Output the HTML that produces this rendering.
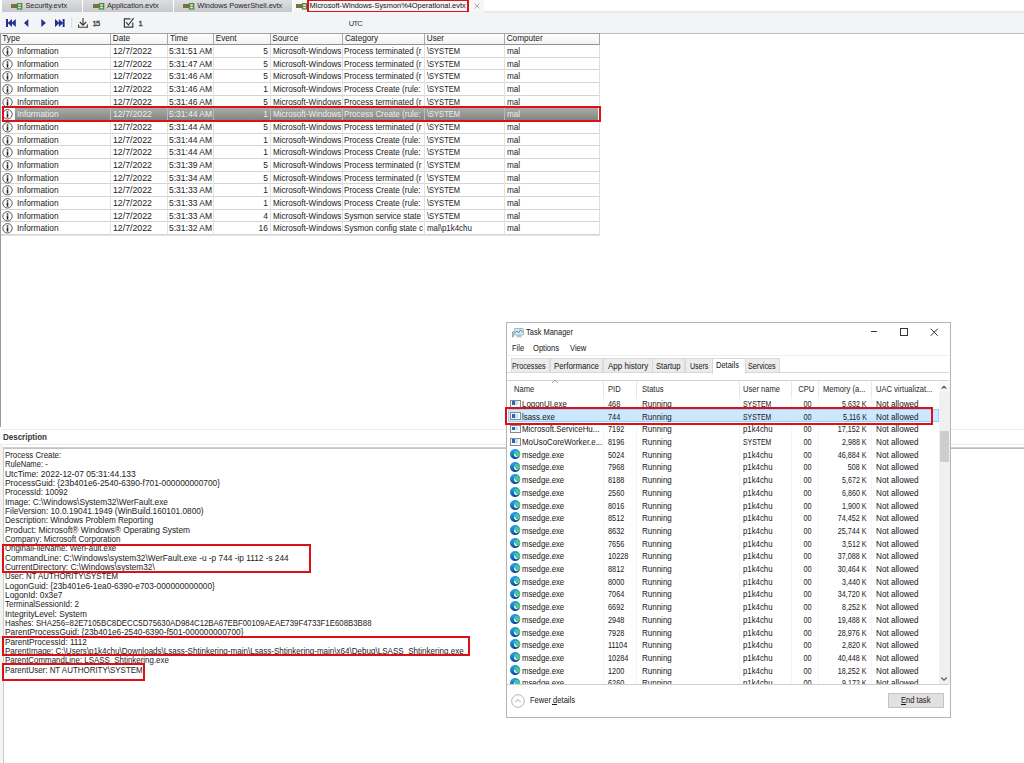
<!DOCTYPE html><html><head><meta charset="utf-8"><style>html,body{margin:0;padding:0;}body{width:1024px;height:763px;position:relative;overflow:hidden;background:#fff;font-family:"Liberation Sans", sans-serif;}div{box-sizing:content-box}</style></head><body>
<div style="position:absolute;left:1.8px;top:0px;width:80.5px;height:11.8px;background:linear-gradient(#dcdee1,#c6c8cb);"></div>
<svg style="position:absolute;left:11.100000000000001px;top:3.1px" width="12" height="8" viewBox="0 0 12 8"><rect x="0" y="1" width="6" height="4" fill="#7d6f3c"/><rect x="5.8" y="0" width="5.5" height="6.6" fill="#4f8a45"/><rect x="7.2" y="1.3" width="2.6" height="1.5" fill="#e8f2e4"/><rect x="7.2" y="3.8" width="2.6" height="1.5" fill="#e8f2e4"/></svg>
<div style="position:absolute;left:25.40px;top:2.34px;font-size:7.4px;line-height:7.4px;color:#2a2a2a;white-space:pre;-webkit-text-stroke:0.03px #2a2a2a;">Security.evtx</div>
<div style="position:absolute;left:83.3px;top:0px;width:89.3px;height:11.8px;background:linear-gradient(#dcdee1,#c6c8cb);"></div>
<svg style="position:absolute;left:92.6px;top:3.1px" width="12" height="8" viewBox="0 0 12 8"><rect x="0" y="1" width="6" height="4" fill="#7d6f3c"/><rect x="5.8" y="0" width="5.5" height="6.6" fill="#4f8a45"/><rect x="7.2" y="1.3" width="2.6" height="1.5" fill="#e8f2e4"/><rect x="7.2" y="3.8" width="2.6" height="1.5" fill="#e8f2e4"/></svg>
<div style="position:absolute;left:106.90px;top:2.34px;font-size:7.4px;line-height:7.4px;color:#2a2a2a;white-space:pre;-webkit-text-stroke:0.03px #2a2a2a;">Application.evtx</div>
<div style="position:absolute;left:173.6px;top:0px;width:118.1px;height:11.8px;background:linear-gradient(#dcdee1,#c6c8cb);"></div>
<svg style="position:absolute;left:182.9px;top:3.1px" width="12" height="8" viewBox="0 0 12 8"><rect x="0" y="1" width="6" height="4" fill="#7d6f3c"/><rect x="5.8" y="0" width="5.5" height="6.6" fill="#4f8a45"/><rect x="7.2" y="1.3" width="2.6" height="1.5" fill="#e8f2e4"/><rect x="7.2" y="3.8" width="2.6" height="1.5" fill="#e8f2e4"/></svg>
<div style="position:absolute;left:197.20px;top:2.34px;font-size:7.4px;line-height:7.4px;color:#2a2a2a;white-space:pre;-webkit-text-stroke:0.03px #2a2a2a;">Windows PowerShell.evtx</div>
<div style="position:absolute;left:292.5px;top:0px;width:191px;height:12.5px;background:#f5f6f7;"></div>
<svg style="position:absolute;left:295.8px;top:3.1px" width="12" height="8" viewBox="0 0 12 8"><rect x="0" y="1" width="6" height="4" fill="#7d6f3c"/><rect x="5.8" y="0" width="5.5" height="6.6" fill="#4f8a45"/><rect x="7.2" y="1.3" width="2.6" height="1.5" fill="#e8f2e4"/><rect x="7.2" y="3.8" width="2.6" height="1.5" fill="#e8f2e4"/></svg>
<div style="position:absolute;left:309.60px;top:2.34px;font-size:7.4px;line-height:7.4px;color:#151515;white-space:pre;-webkit-text-stroke:0.03px #151515;">Microsoft-Windows-Sysmon%4Operational.evtx</div>
<div style="position:absolute;left:307.3px;top:-1.5px;width:157.90px;height:10.00px;border:2.4px solid #dd1016;"></div>
<svg style="position:absolute;left:473.5px;top:2.5px" width="6" height="6" viewBox="0 0 6 6"><path d="M0.6 0.6 L5.4 5.4 M5.4 0.6 L0.6 5.4" stroke="#98a4a8" stroke-width="0.9"/></svg>
<div style="position:absolute;left:484px;top:11.4px;width:540px;height:1.2px;background:#e8e9eb"></div>
<div style="position:absolute;left:0px;top:11.8px;width:1024px;height:21.3px;background:#f3f4f6;"></div>
<div style="position:absolute;left:484px;top:11.4px;width:540px;height:1.2px;background:#e8e9eb"></div>
<div style="position:absolute;left:600px;top:32.7px;width:424px;height:1px;background:#bdbdbd"></div>
<svg style="position:absolute;left:0;top:0" width="160" height="34" viewBox="0 0 160 34"><g fill="#262f8f"><rect x="6" y="19" width="2" height="8"/><path d="M7.6 23 L12 19 V27Z"/><path d="M11.4 23 L15.8 19 V27Z"/><path d="M24 23 L28.3 19 V27Z"/><path d="M45.9 23 L41.3 19 V27Z"/><path d="M55 19 L59.4 23 L55 27Z"/><path d="M58.8 19 L63.2 23 L58.8 27Z"/><rect x="62.6" y="19" width="2" height="8"/></g><rect x="71.2" y="17" width="1" height="11" fill="#d9dbde"/><g stroke="#3a3a3a" stroke-width="1.1" fill="none"><path d="M83 18 V25 M79.8 22 L83 25.2 L86.2 22 M78.6 24.5 V27.3 H87.4 V24.5"/></g><g stroke="#3a3a3a" stroke-width="1.2" fill="none"><path d="M132.8 22.5 V27.2 H124.4 V18.9 H130.5"/><path d="M126.2 22.2 L128.4 25 L133.6 18.2"/></g></svg>
<div style="position:absolute;left:92.40px;top:19.77px;font-size:7.6px;line-height:7.6px;color:#3a3a3a;white-space:pre;letter-spacing:-0.6px;-webkit-text-stroke:0.3px #3a3a3a;">15</div>
<div style="position:absolute;left:138.60px;top:19.77px;font-size:7.6px;line-height:7.6px;color:#3a3a3a;white-space:pre;-webkit-text-stroke:0.3px #3a3a3a;">1</div>
<div style="position:absolute;left:348.70px;top:19.95px;font-size:7.5px;line-height:7.5px;color:#333;white-space:pre;letter-spacing:-0.7px;-webkit-text-stroke:0.03px #333;">UTC</div>
<div style="position:absolute;left:0px;top:32.6px;width:599.6px;height:10.4px;background:linear-gradient(#fefefe,#f2f2f2);border-top:1px solid #a2a2a2;border-bottom:1px solid #8f8f8f;"></div>
<div style="position:absolute;left:2.30px;top:34.56px;font-size:8.2px;line-height:8.2px;color:#262626;white-space:pre;-webkit-text-stroke:0.03px #262626;">Type</div>
<div style="position:absolute;left:110.0px;top:33.5px;width:1px;height:11px;background:#a8a8a8"></div>
<div style="position:absolute;left:112.80px;top:34.56px;font-size:8.2px;line-height:8.2px;color:#262626;white-space:pre;-webkit-text-stroke:0.03px #262626;">Date</div>
<div style="position:absolute;left:167.2px;top:33.5px;width:1px;height:11px;background:#a8a8a8"></div>
<div style="position:absolute;left:170.00px;top:34.56px;font-size:8.2px;line-height:8.2px;color:#262626;white-space:pre;-webkit-text-stroke:0.03px #262626;">Time</div>
<div style="position:absolute;left:212.9px;top:33.5px;width:1px;height:11px;background:#a8a8a8"></div>
<div style="position:absolute;left:215.70px;top:34.56px;font-size:8.2px;line-height:8.2px;color:#262626;white-space:pre;-webkit-text-stroke:0.03px #262626;">Event</div>
<div style="position:absolute;left:269.5px;top:33.5px;width:1px;height:11px;background:#a8a8a8"></div>
<div style="position:absolute;left:272.30px;top:34.56px;font-size:8.2px;line-height:8.2px;color:#262626;white-space:pre;-webkit-text-stroke:0.03px #262626;">Source</div>
<div style="position:absolute;left:342.1px;top:33.5px;width:1px;height:11px;background:#a8a8a8"></div>
<div style="position:absolute;left:344.90px;top:34.56px;font-size:8.2px;line-height:8.2px;color:#262626;white-space:pre;-webkit-text-stroke:0.03px #262626;">Category</div>
<div style="position:absolute;left:424.0px;top:33.5px;width:1px;height:11px;background:#a8a8a8"></div>
<div style="position:absolute;left:426.80px;top:34.56px;font-size:8.2px;line-height:8.2px;color:#262626;white-space:pre;-webkit-text-stroke:0.03px #262626;">User</div>
<div style="position:absolute;left:503.9px;top:33.5px;width:1px;height:11px;background:#a8a8a8"></div>
<div style="position:absolute;left:506.70px;top:34.56px;font-size:8.2px;line-height:8.2px;color:#262626;white-space:pre;-webkit-text-stroke:0.03px #262626;">Computer</div>
<div style="position:absolute;left:599.1px;top:33.5px;width:1px;height:11px;background:#a8a8a8"></div>
<div style="position:absolute;left:0px;top:33px;width:1px;height:394px;background:#9a9a9a"></div>
<div style="position:absolute;left:1px;top:56.769999999999996px;width:598.6px;height:0.8px;background:#d4d4d4"></div>
<div style="position:absolute;left:110.1px;top:44.8px;width:0.8px;height:12.67px;background:#e2e2e2"></div>
<div style="position:absolute;left:167.29999999999998px;top:44.8px;width:0.8px;height:12.67px;background:#e2e2e2"></div>
<div style="position:absolute;left:213.0px;top:44.8px;width:0.8px;height:12.67px;background:#e2e2e2"></div>
<div style="position:absolute;left:269.6px;top:44.8px;width:0.8px;height:12.67px;background:#e2e2e2"></div>
<div style="position:absolute;left:342.20000000000005px;top:44.8px;width:0.8px;height:12.67px;background:#e2e2e2"></div>
<div style="position:absolute;left:424.1px;top:44.8px;width:0.8px;height:12.67px;background:#e2e2e2"></div>
<div style="position:absolute;left:504.0px;top:44.8px;width:0.8px;height:12.67px;background:#e2e2e2"></div>
<div style="position:absolute;left:599.2px;top:44.8px;width:0.8px;height:12.67px;background:#dedede"></div>
<svg style="position:absolute;left:1.6px;top:46.00px" width="11" height="11" viewBox="0 0 11 11"><circle cx="5.5" cy="5.3" r="4.7" fill="#fff" stroke="#555" stroke-width="1"/><rect x="4.7" y="2.3" width="1.6" height="1.4" fill="#1e2030"/><rect x="4.7" y="4.4" width="1.6" height="4.2" fill="#1e2030"/></svg>
<div style="position:absolute;left:17.30px;top:46.95px;font-size:8.8px;line-height:8.8px;color:#242424;white-space:pre;font-weight:normal;-webkit-text-stroke:0.03px #242424;transform:scaleX(0.9428);transform-origin:left center">Information</div>
<div style="position:absolute;left:112.90px;top:46.95px;font-size:8.8px;line-height:8.8px;color:#242424;white-space:pre;font-weight:normal;-webkit-text-stroke:0.03px #242424;transform:scaleX(0.9964);transform-origin:left center">12/7/2022</div>
<div style="position:absolute;left:169.30px;top:46.95px;font-size:8.8px;line-height:8.8px;color:#242424;white-space:pre;font-weight:normal;-webkit-text-stroke:0.03px #242424;transform:scaleX(0.9660);transform-origin:left center">5:31:51 AM</div>
<div style="position:absolute;right:756.20px;top:46.95px;font-size:8.8px;line-height:8.8px;color:#242424;white-space:pre;transform:scaleX(0.95);transform-origin:right center;-webkit-text-stroke:0.03px #242424;">5</div>
<div style="position:absolute;left:272.5px;top:45.95px;width:69px;overflow:hidden;font-size:8.8px;line-height:10.8px;height:10.8px;color:#242424;white-space:pre;"><div style="transform:scaleX(0.92);transform-origin:left center;-webkit-text-stroke:0.03px #242424;">Microsoft-Windows</div></div>
<div style="position:absolute;left:344.4px;top:45.95px;width:79.5px;overflow:hidden;font-size:8.8px;line-height:10.8px;height:10.8px;color:#242424;white-space:pre;"><div style="transform:scaleX(0.92);transform-origin:left center;-webkit-text-stroke:0.03px #242424;">Process terminated (r</div></div>
<div style="position:absolute;left:427.00px;top:46.95px;font-size:8.8px;line-height:8.8px;color:#242424;white-space:pre;font-weight:normal;-webkit-text-stroke:0.03px #242424;transform:scaleX(0.8544);transform-origin:left center">\SYSTEM</div>
<div style="position:absolute;left:507.00px;top:46.95px;font-size:8.8px;line-height:8.8px;color:#242424;white-space:pre;transform:scaleX(0.93);transform-origin:left center;-webkit-text-stroke:0.03px #242424;">mal</div>
<div style="position:absolute;left:1px;top:69.44px;width:598.6px;height:0.8px;background:#d4d4d4"></div>
<div style="position:absolute;left:110.1px;top:57.47px;width:0.8px;height:12.67px;background:#e2e2e2"></div>
<div style="position:absolute;left:167.29999999999998px;top:57.47px;width:0.8px;height:12.67px;background:#e2e2e2"></div>
<div style="position:absolute;left:213.0px;top:57.47px;width:0.8px;height:12.67px;background:#e2e2e2"></div>
<div style="position:absolute;left:269.6px;top:57.47px;width:0.8px;height:12.67px;background:#e2e2e2"></div>
<div style="position:absolute;left:342.20000000000005px;top:57.47px;width:0.8px;height:12.67px;background:#e2e2e2"></div>
<div style="position:absolute;left:424.1px;top:57.47px;width:0.8px;height:12.67px;background:#e2e2e2"></div>
<div style="position:absolute;left:504.0px;top:57.47px;width:0.8px;height:12.67px;background:#e2e2e2"></div>
<div style="position:absolute;left:599.2px;top:57.47px;width:0.8px;height:12.67px;background:#dedede"></div>
<svg style="position:absolute;left:1.6px;top:58.67px" width="11" height="11" viewBox="0 0 11 11"><circle cx="5.5" cy="5.3" r="4.7" fill="#fff" stroke="#555" stroke-width="1"/><rect x="4.7" y="2.3" width="1.6" height="1.4" fill="#1e2030"/><rect x="4.7" y="4.4" width="1.6" height="4.2" fill="#1e2030"/></svg>
<div style="position:absolute;left:17.30px;top:59.62px;font-size:8.8px;line-height:8.8px;color:#242424;white-space:pre;font-weight:normal;-webkit-text-stroke:0.03px #242424;transform:scaleX(0.9428);transform-origin:left center">Information</div>
<div style="position:absolute;left:112.90px;top:59.62px;font-size:8.8px;line-height:8.8px;color:#242424;white-space:pre;font-weight:normal;-webkit-text-stroke:0.03px #242424;transform:scaleX(0.9964);transform-origin:left center">12/7/2022</div>
<div style="position:absolute;left:169.30px;top:59.62px;font-size:8.8px;line-height:8.8px;color:#242424;white-space:pre;font-weight:normal;-webkit-text-stroke:0.03px #242424;transform:scaleX(0.9660);transform-origin:left center">5:31:47 AM</div>
<div style="position:absolute;right:756.20px;top:59.62px;font-size:8.8px;line-height:8.8px;color:#242424;white-space:pre;transform:scaleX(0.95);transform-origin:right center;-webkit-text-stroke:0.03px #242424;">5</div>
<div style="position:absolute;left:272.5px;top:58.62px;width:69px;overflow:hidden;font-size:8.8px;line-height:10.8px;height:10.8px;color:#242424;white-space:pre;"><div style="transform:scaleX(0.92);transform-origin:left center;-webkit-text-stroke:0.03px #242424;">Microsoft-Windows</div></div>
<div style="position:absolute;left:344.4px;top:58.62px;width:79.5px;overflow:hidden;font-size:8.8px;line-height:10.8px;height:10.8px;color:#242424;white-space:pre;"><div style="transform:scaleX(0.92);transform-origin:left center;-webkit-text-stroke:0.03px #242424;">Process terminated (r</div></div>
<div style="position:absolute;left:427.00px;top:59.62px;font-size:8.8px;line-height:8.8px;color:#242424;white-space:pre;font-weight:normal;-webkit-text-stroke:0.03px #242424;transform:scaleX(0.8544);transform-origin:left center">\SYSTEM</div>
<div style="position:absolute;left:507.00px;top:59.62px;font-size:8.8px;line-height:8.8px;color:#242424;white-space:pre;transform:scaleX(0.93);transform-origin:left center;-webkit-text-stroke:0.03px #242424;">mal</div>
<div style="position:absolute;left:1px;top:82.11px;width:598.6px;height:0.8px;background:#d4d4d4"></div>
<div style="position:absolute;left:110.1px;top:70.14px;width:0.8px;height:12.67px;background:#e2e2e2"></div>
<div style="position:absolute;left:167.29999999999998px;top:70.14px;width:0.8px;height:12.67px;background:#e2e2e2"></div>
<div style="position:absolute;left:213.0px;top:70.14px;width:0.8px;height:12.67px;background:#e2e2e2"></div>
<div style="position:absolute;left:269.6px;top:70.14px;width:0.8px;height:12.67px;background:#e2e2e2"></div>
<div style="position:absolute;left:342.20000000000005px;top:70.14px;width:0.8px;height:12.67px;background:#e2e2e2"></div>
<div style="position:absolute;left:424.1px;top:70.14px;width:0.8px;height:12.67px;background:#e2e2e2"></div>
<div style="position:absolute;left:504.0px;top:70.14px;width:0.8px;height:12.67px;background:#e2e2e2"></div>
<div style="position:absolute;left:599.2px;top:70.14px;width:0.8px;height:12.67px;background:#dedede"></div>
<svg style="position:absolute;left:1.6px;top:71.34px" width="11" height="11" viewBox="0 0 11 11"><circle cx="5.5" cy="5.3" r="4.7" fill="#fff" stroke="#555" stroke-width="1"/><rect x="4.7" y="2.3" width="1.6" height="1.4" fill="#1e2030"/><rect x="4.7" y="4.4" width="1.6" height="4.2" fill="#1e2030"/></svg>
<div style="position:absolute;left:17.30px;top:72.29px;font-size:8.8px;line-height:8.8px;color:#242424;white-space:pre;font-weight:normal;-webkit-text-stroke:0.03px #242424;transform:scaleX(0.9428);transform-origin:left center">Information</div>
<div style="position:absolute;left:112.90px;top:72.29px;font-size:8.8px;line-height:8.8px;color:#242424;white-space:pre;font-weight:normal;-webkit-text-stroke:0.03px #242424;transform:scaleX(0.9964);transform-origin:left center">12/7/2022</div>
<div style="position:absolute;left:169.30px;top:72.29px;font-size:8.8px;line-height:8.8px;color:#242424;white-space:pre;font-weight:normal;-webkit-text-stroke:0.03px #242424;transform:scaleX(0.9660);transform-origin:left center">5:31:46 AM</div>
<div style="position:absolute;right:756.20px;top:72.29px;font-size:8.8px;line-height:8.8px;color:#242424;white-space:pre;transform:scaleX(0.95);transform-origin:right center;-webkit-text-stroke:0.03px #242424;">5</div>
<div style="position:absolute;left:272.5px;top:71.29px;width:69px;overflow:hidden;font-size:8.8px;line-height:10.8px;height:10.8px;color:#242424;white-space:pre;"><div style="transform:scaleX(0.92);transform-origin:left center;-webkit-text-stroke:0.03px #242424;">Microsoft-Windows</div></div>
<div style="position:absolute;left:344.4px;top:71.29px;width:79.5px;overflow:hidden;font-size:8.8px;line-height:10.8px;height:10.8px;color:#242424;white-space:pre;"><div style="transform:scaleX(0.92);transform-origin:left center;-webkit-text-stroke:0.03px #242424;">Process terminated (r</div></div>
<div style="position:absolute;left:427.00px;top:72.29px;font-size:8.8px;line-height:8.8px;color:#242424;white-space:pre;font-weight:normal;-webkit-text-stroke:0.03px #242424;transform:scaleX(0.8544);transform-origin:left center">\SYSTEM</div>
<div style="position:absolute;left:507.00px;top:72.29px;font-size:8.8px;line-height:8.8px;color:#242424;white-space:pre;transform:scaleX(0.93);transform-origin:left center;-webkit-text-stroke:0.03px #242424;">mal</div>
<div style="position:absolute;left:1px;top:94.78px;width:598.6px;height:0.8px;background:#d4d4d4"></div>
<div style="position:absolute;left:110.1px;top:82.81px;width:0.8px;height:12.67px;background:#e2e2e2"></div>
<div style="position:absolute;left:167.29999999999998px;top:82.81px;width:0.8px;height:12.67px;background:#e2e2e2"></div>
<div style="position:absolute;left:213.0px;top:82.81px;width:0.8px;height:12.67px;background:#e2e2e2"></div>
<div style="position:absolute;left:269.6px;top:82.81px;width:0.8px;height:12.67px;background:#e2e2e2"></div>
<div style="position:absolute;left:342.20000000000005px;top:82.81px;width:0.8px;height:12.67px;background:#e2e2e2"></div>
<div style="position:absolute;left:424.1px;top:82.81px;width:0.8px;height:12.67px;background:#e2e2e2"></div>
<div style="position:absolute;left:504.0px;top:82.81px;width:0.8px;height:12.67px;background:#e2e2e2"></div>
<div style="position:absolute;left:599.2px;top:82.81px;width:0.8px;height:12.67px;background:#dedede"></div>
<svg style="position:absolute;left:1.6px;top:84.01px" width="11" height="11" viewBox="0 0 11 11"><circle cx="5.5" cy="5.3" r="4.7" fill="#fff" stroke="#555" stroke-width="1"/><rect x="4.7" y="2.3" width="1.6" height="1.4" fill="#1e2030"/><rect x="4.7" y="4.4" width="1.6" height="4.2" fill="#1e2030"/></svg>
<div style="position:absolute;left:17.30px;top:84.96px;font-size:8.8px;line-height:8.8px;color:#242424;white-space:pre;font-weight:normal;-webkit-text-stroke:0.03px #242424;transform:scaleX(0.9428);transform-origin:left center">Information</div>
<div style="position:absolute;left:112.90px;top:84.96px;font-size:8.8px;line-height:8.8px;color:#242424;white-space:pre;font-weight:normal;-webkit-text-stroke:0.03px #242424;transform:scaleX(0.9964);transform-origin:left center">12/7/2022</div>
<div style="position:absolute;left:169.30px;top:84.96px;font-size:8.8px;line-height:8.8px;color:#242424;white-space:pre;font-weight:normal;-webkit-text-stroke:0.03px #242424;transform:scaleX(0.9660);transform-origin:left center">5:31:46 AM</div>
<div style="position:absolute;right:756.20px;top:84.96px;font-size:8.8px;line-height:8.8px;color:#242424;white-space:pre;transform:scaleX(0.95);transform-origin:right center;-webkit-text-stroke:0.03px #242424;">1</div>
<div style="position:absolute;left:272.5px;top:83.96px;width:69px;overflow:hidden;font-size:8.8px;line-height:10.8px;height:10.8px;color:#242424;white-space:pre;"><div style="transform:scaleX(0.92);transform-origin:left center;-webkit-text-stroke:0.03px #242424;">Microsoft-Windows</div></div>
<div style="position:absolute;left:344.4px;top:83.96px;width:79.5px;overflow:hidden;font-size:8.8px;line-height:10.8px;height:10.8px;color:#242424;white-space:pre;"><div style="transform:scaleX(0.92);transform-origin:left center;-webkit-text-stroke:0.03px #242424;">Process Create (rule: </div></div>
<div style="position:absolute;left:427.00px;top:84.96px;font-size:8.8px;line-height:8.8px;color:#242424;white-space:pre;font-weight:normal;-webkit-text-stroke:0.03px #242424;transform:scaleX(0.8544);transform-origin:left center">\SYSTEM</div>
<div style="position:absolute;left:507.00px;top:84.96px;font-size:8.8px;line-height:8.8px;color:#242424;white-space:pre;transform:scaleX(0.93);transform-origin:left center;-webkit-text-stroke:0.03px #242424;">mal</div>
<div style="position:absolute;left:1px;top:107.44999999999999px;width:598.6px;height:0.8px;background:#d4d4d4"></div>
<div style="position:absolute;left:110.1px;top:95.47999999999999px;width:0.8px;height:12.67px;background:#e2e2e2"></div>
<div style="position:absolute;left:167.29999999999998px;top:95.47999999999999px;width:0.8px;height:12.67px;background:#e2e2e2"></div>
<div style="position:absolute;left:213.0px;top:95.47999999999999px;width:0.8px;height:12.67px;background:#e2e2e2"></div>
<div style="position:absolute;left:269.6px;top:95.47999999999999px;width:0.8px;height:12.67px;background:#e2e2e2"></div>
<div style="position:absolute;left:342.20000000000005px;top:95.47999999999999px;width:0.8px;height:12.67px;background:#e2e2e2"></div>
<div style="position:absolute;left:424.1px;top:95.47999999999999px;width:0.8px;height:12.67px;background:#e2e2e2"></div>
<div style="position:absolute;left:504.0px;top:95.47999999999999px;width:0.8px;height:12.67px;background:#e2e2e2"></div>
<div style="position:absolute;left:599.2px;top:95.47999999999999px;width:0.8px;height:12.67px;background:#dedede"></div>
<svg style="position:absolute;left:1.6px;top:96.68px" width="11" height="11" viewBox="0 0 11 11"><circle cx="5.5" cy="5.3" r="4.7" fill="#fff" stroke="#555" stroke-width="1"/><rect x="4.7" y="2.3" width="1.6" height="1.4" fill="#1e2030"/><rect x="4.7" y="4.4" width="1.6" height="4.2" fill="#1e2030"/></svg>
<div style="position:absolute;left:17.30px;top:97.63px;font-size:8.8px;line-height:8.8px;color:#242424;white-space:pre;font-weight:normal;-webkit-text-stroke:0.03px #242424;transform:scaleX(0.9428);transform-origin:left center">Information</div>
<div style="position:absolute;left:112.90px;top:97.63px;font-size:8.8px;line-height:8.8px;color:#242424;white-space:pre;font-weight:normal;-webkit-text-stroke:0.03px #242424;transform:scaleX(0.9964);transform-origin:left center">12/7/2022</div>
<div style="position:absolute;left:169.30px;top:97.63px;font-size:8.8px;line-height:8.8px;color:#242424;white-space:pre;font-weight:normal;-webkit-text-stroke:0.03px #242424;transform:scaleX(0.9660);transform-origin:left center">5:31:46 AM</div>
<div style="position:absolute;right:756.20px;top:97.63px;font-size:8.8px;line-height:8.8px;color:#242424;white-space:pre;transform:scaleX(0.95);transform-origin:right center;-webkit-text-stroke:0.03px #242424;">5</div>
<div style="position:absolute;left:272.5px;top:96.63px;width:69px;overflow:hidden;font-size:8.8px;line-height:10.8px;height:10.8px;color:#242424;white-space:pre;"><div style="transform:scaleX(0.92);transform-origin:left center;-webkit-text-stroke:0.03px #242424;">Microsoft-Windows</div></div>
<div style="position:absolute;left:344.4px;top:96.63px;width:79.5px;overflow:hidden;font-size:8.8px;line-height:10.8px;height:10.8px;color:#242424;white-space:pre;"><div style="transform:scaleX(0.92);transform-origin:left center;-webkit-text-stroke:0.03px #242424;">Process terminated (r</div></div>
<div style="position:absolute;left:427.00px;top:97.63px;font-size:8.8px;line-height:8.8px;color:#242424;white-space:pre;font-weight:normal;-webkit-text-stroke:0.03px #242424;transform:scaleX(0.8544);transform-origin:left center">\SYSTEM</div>
<div style="position:absolute;left:507.00px;top:97.63px;font-size:8.8px;line-height:8.8px;color:#242424;white-space:pre;transform:scaleX(0.93);transform-origin:left center;-webkit-text-stroke:0.03px #242424;">mal</div>
<div style="position:absolute;left:14.6px;top:108.35000000000001px;width:583.6px;height:12.27px;background:linear-gradient(#aaaba5,#7d8383);"></div>
<div style="position:absolute;left:1px;top:120.12px;width:598.6px;height:0.8px;background:#d4d4d4"></div>
<div style="position:absolute;left:110.1px;top:108.15px;width:0.8px;height:12.67px;background:#b9bcbb"></div>
<div style="position:absolute;left:167.29999999999998px;top:108.15px;width:0.8px;height:12.67px;background:#b9bcbb"></div>
<div style="position:absolute;left:213.0px;top:108.15px;width:0.8px;height:12.67px;background:#b9bcbb"></div>
<div style="position:absolute;left:269.6px;top:108.15px;width:0.8px;height:12.67px;background:#b9bcbb"></div>
<div style="position:absolute;left:342.20000000000005px;top:108.15px;width:0.8px;height:12.67px;background:#b9bcbb"></div>
<div style="position:absolute;left:424.1px;top:108.15px;width:0.8px;height:12.67px;background:#b9bcbb"></div>
<div style="position:absolute;left:504.0px;top:108.15px;width:0.8px;height:12.67px;background:#b9bcbb"></div>
<div style="position:absolute;left:599.2px;top:108.15px;width:0.8px;height:12.67px;background:#dedede"></div>
<svg style="position:absolute;left:1.6px;top:109.35px" width="11" height="11" viewBox="0 0 11 11"><circle cx="5.5" cy="5.3" r="4.7" fill="#fff" stroke="#555" stroke-width="1"/><rect x="4.7" y="2.3" width="1.6" height="1.4" fill="#1e2030"/><rect x="4.7" y="4.4" width="1.6" height="4.2" fill="#1e2030"/></svg>
<div style="position:absolute;left:17.30px;top:110.30px;font-size:8.8px;line-height:8.8px;color:#ececec;white-space:pre;font-weight:normal;-webkit-text-stroke:0.03px #ececec;transform:scaleX(0.9428);transform-origin:left center">Information</div>
<div style="position:absolute;left:112.90px;top:110.30px;font-size:8.8px;line-height:8.8px;color:#ececec;white-space:pre;font-weight:normal;-webkit-text-stroke:0.03px #ececec;transform:scaleX(0.9964);transform-origin:left center">12/7/2022</div>
<div style="position:absolute;left:169.30px;top:110.30px;font-size:8.8px;line-height:8.8px;color:#ececec;white-space:pre;font-weight:normal;-webkit-text-stroke:0.03px #ececec;transform:scaleX(0.9660);transform-origin:left center">5:31:44 AM</div>
<div style="position:absolute;right:756.20px;top:110.30px;font-size:8.8px;line-height:8.8px;color:#ececec;white-space:pre;transform:scaleX(0.95);transform-origin:right center;-webkit-text-stroke:0.03px #ececec;">1</div>
<div style="position:absolute;left:272.5px;top:109.30px;width:69px;overflow:hidden;font-size:8.8px;line-height:10.8px;height:10.8px;color:#ececec;white-space:pre;"><div style="transform:scaleX(0.92);transform-origin:left center;-webkit-text-stroke:0.03px #ececec;">Microsoft-Windows</div></div>
<div style="position:absolute;left:344.4px;top:109.30px;width:79.5px;overflow:hidden;font-size:8.8px;line-height:10.8px;height:10.8px;color:#ececec;white-space:pre;"><div style="transform:scaleX(0.92);transform-origin:left center;-webkit-text-stroke:0.03px #ececec;">Process Create (rule: </div></div>
<div style="position:absolute;left:427.00px;top:110.30px;font-size:8.8px;line-height:8.8px;color:#ececec;white-space:pre;font-weight:normal;-webkit-text-stroke:0.03px #ececec;transform:scaleX(0.8544);transform-origin:left center">\SYSTEM</div>
<div style="position:absolute;left:507.00px;top:110.30px;font-size:8.8px;line-height:8.8px;color:#ececec;white-space:pre;transform:scaleX(0.93);transform-origin:left center;-webkit-text-stroke:0.03px #ececec;">mal</div>
<div style="position:absolute;left:1px;top:132.79px;width:598.6px;height:0.8px;background:#d4d4d4"></div>
<div style="position:absolute;left:110.1px;top:120.82px;width:0.8px;height:12.67px;background:#e2e2e2"></div>
<div style="position:absolute;left:167.29999999999998px;top:120.82px;width:0.8px;height:12.67px;background:#e2e2e2"></div>
<div style="position:absolute;left:213.0px;top:120.82px;width:0.8px;height:12.67px;background:#e2e2e2"></div>
<div style="position:absolute;left:269.6px;top:120.82px;width:0.8px;height:12.67px;background:#e2e2e2"></div>
<div style="position:absolute;left:342.20000000000005px;top:120.82px;width:0.8px;height:12.67px;background:#e2e2e2"></div>
<div style="position:absolute;left:424.1px;top:120.82px;width:0.8px;height:12.67px;background:#e2e2e2"></div>
<div style="position:absolute;left:504.0px;top:120.82px;width:0.8px;height:12.67px;background:#e2e2e2"></div>
<div style="position:absolute;left:599.2px;top:120.82px;width:0.8px;height:12.67px;background:#dedede"></div>
<svg style="position:absolute;left:1.6px;top:122.02px" width="11" height="11" viewBox="0 0 11 11"><circle cx="5.5" cy="5.3" r="4.7" fill="#fff" stroke="#555" stroke-width="1"/><rect x="4.7" y="2.3" width="1.6" height="1.4" fill="#1e2030"/><rect x="4.7" y="4.4" width="1.6" height="4.2" fill="#1e2030"/></svg>
<div style="position:absolute;left:17.30px;top:122.97px;font-size:8.8px;line-height:8.8px;color:#242424;white-space:pre;font-weight:normal;-webkit-text-stroke:0.03px #242424;transform:scaleX(0.9428);transform-origin:left center">Information</div>
<div style="position:absolute;left:112.90px;top:122.97px;font-size:8.8px;line-height:8.8px;color:#242424;white-space:pre;font-weight:normal;-webkit-text-stroke:0.03px #242424;transform:scaleX(0.9964);transform-origin:left center">12/7/2022</div>
<div style="position:absolute;left:169.30px;top:122.97px;font-size:8.8px;line-height:8.8px;color:#242424;white-space:pre;font-weight:normal;-webkit-text-stroke:0.03px #242424;transform:scaleX(0.9660);transform-origin:left center">5:31:44 AM</div>
<div style="position:absolute;right:756.20px;top:122.97px;font-size:8.8px;line-height:8.8px;color:#242424;white-space:pre;transform:scaleX(0.95);transform-origin:right center;-webkit-text-stroke:0.03px #242424;">5</div>
<div style="position:absolute;left:272.5px;top:121.97px;width:69px;overflow:hidden;font-size:8.8px;line-height:10.8px;height:10.8px;color:#242424;white-space:pre;"><div style="transform:scaleX(0.92);transform-origin:left center;-webkit-text-stroke:0.03px #242424;">Microsoft-Windows</div></div>
<div style="position:absolute;left:344.4px;top:121.97px;width:79.5px;overflow:hidden;font-size:8.8px;line-height:10.8px;height:10.8px;color:#242424;white-space:pre;"><div style="transform:scaleX(0.92);transform-origin:left center;-webkit-text-stroke:0.03px #242424;">Process terminated (r</div></div>
<div style="position:absolute;left:427.00px;top:122.97px;font-size:8.8px;line-height:8.8px;color:#242424;white-space:pre;font-weight:normal;-webkit-text-stroke:0.03px #242424;transform:scaleX(0.8544);transform-origin:left center">\SYSTEM</div>
<div style="position:absolute;left:507.00px;top:122.97px;font-size:8.8px;line-height:8.8px;color:#242424;white-space:pre;transform:scaleX(0.93);transform-origin:left center;-webkit-text-stroke:0.03px #242424;">mal</div>
<div style="position:absolute;left:1px;top:145.46px;width:598.6px;height:0.8px;background:#d4d4d4"></div>
<div style="position:absolute;left:110.1px;top:133.49px;width:0.8px;height:12.67px;background:#e2e2e2"></div>
<div style="position:absolute;left:167.29999999999998px;top:133.49px;width:0.8px;height:12.67px;background:#e2e2e2"></div>
<div style="position:absolute;left:213.0px;top:133.49px;width:0.8px;height:12.67px;background:#e2e2e2"></div>
<div style="position:absolute;left:269.6px;top:133.49px;width:0.8px;height:12.67px;background:#e2e2e2"></div>
<div style="position:absolute;left:342.20000000000005px;top:133.49px;width:0.8px;height:12.67px;background:#e2e2e2"></div>
<div style="position:absolute;left:424.1px;top:133.49px;width:0.8px;height:12.67px;background:#e2e2e2"></div>
<div style="position:absolute;left:504.0px;top:133.49px;width:0.8px;height:12.67px;background:#e2e2e2"></div>
<div style="position:absolute;left:599.2px;top:133.49px;width:0.8px;height:12.67px;background:#dedede"></div>
<svg style="position:absolute;left:1.6px;top:134.69px" width="11" height="11" viewBox="0 0 11 11"><circle cx="5.5" cy="5.3" r="4.7" fill="#fff" stroke="#555" stroke-width="1"/><rect x="4.7" y="2.3" width="1.6" height="1.4" fill="#1e2030"/><rect x="4.7" y="4.4" width="1.6" height="4.2" fill="#1e2030"/></svg>
<div style="position:absolute;left:17.30px;top:135.64px;font-size:8.8px;line-height:8.8px;color:#242424;white-space:pre;font-weight:normal;-webkit-text-stroke:0.03px #242424;transform:scaleX(0.9428);transform-origin:left center">Information</div>
<div style="position:absolute;left:112.90px;top:135.64px;font-size:8.8px;line-height:8.8px;color:#242424;white-space:pre;font-weight:normal;-webkit-text-stroke:0.03px #242424;transform:scaleX(0.9964);transform-origin:left center">12/7/2022</div>
<div style="position:absolute;left:169.30px;top:135.64px;font-size:8.8px;line-height:8.8px;color:#242424;white-space:pre;font-weight:normal;-webkit-text-stroke:0.03px #242424;transform:scaleX(0.9660);transform-origin:left center">5:31:44 AM</div>
<div style="position:absolute;right:756.20px;top:135.64px;font-size:8.8px;line-height:8.8px;color:#242424;white-space:pre;transform:scaleX(0.95);transform-origin:right center;-webkit-text-stroke:0.03px #242424;">1</div>
<div style="position:absolute;left:272.5px;top:134.64px;width:69px;overflow:hidden;font-size:8.8px;line-height:10.8px;height:10.8px;color:#242424;white-space:pre;"><div style="transform:scaleX(0.92);transform-origin:left center;-webkit-text-stroke:0.03px #242424;">Microsoft-Windows</div></div>
<div style="position:absolute;left:344.4px;top:134.64px;width:79.5px;overflow:hidden;font-size:8.8px;line-height:10.8px;height:10.8px;color:#242424;white-space:pre;"><div style="transform:scaleX(0.92);transform-origin:left center;-webkit-text-stroke:0.03px #242424;">Process Create (rule: </div></div>
<div style="position:absolute;left:427.00px;top:135.64px;font-size:8.8px;line-height:8.8px;color:#242424;white-space:pre;font-weight:normal;-webkit-text-stroke:0.03px #242424;transform:scaleX(0.8544);transform-origin:left center">\SYSTEM</div>
<div style="position:absolute;left:507.00px;top:135.64px;font-size:8.8px;line-height:8.8px;color:#242424;white-space:pre;transform:scaleX(0.93);transform-origin:left center;-webkit-text-stroke:0.03px #242424;">mal</div>
<div style="position:absolute;left:1px;top:158.13px;width:598.6px;height:0.8px;background:#d4d4d4"></div>
<div style="position:absolute;left:110.1px;top:146.16px;width:0.8px;height:12.67px;background:#e2e2e2"></div>
<div style="position:absolute;left:167.29999999999998px;top:146.16px;width:0.8px;height:12.67px;background:#e2e2e2"></div>
<div style="position:absolute;left:213.0px;top:146.16px;width:0.8px;height:12.67px;background:#e2e2e2"></div>
<div style="position:absolute;left:269.6px;top:146.16px;width:0.8px;height:12.67px;background:#e2e2e2"></div>
<div style="position:absolute;left:342.20000000000005px;top:146.16px;width:0.8px;height:12.67px;background:#e2e2e2"></div>
<div style="position:absolute;left:424.1px;top:146.16px;width:0.8px;height:12.67px;background:#e2e2e2"></div>
<div style="position:absolute;left:504.0px;top:146.16px;width:0.8px;height:12.67px;background:#e2e2e2"></div>
<div style="position:absolute;left:599.2px;top:146.16px;width:0.8px;height:12.67px;background:#dedede"></div>
<svg style="position:absolute;left:1.6px;top:147.36px" width="11" height="11" viewBox="0 0 11 11"><circle cx="5.5" cy="5.3" r="4.7" fill="#fff" stroke="#555" stroke-width="1"/><rect x="4.7" y="2.3" width="1.6" height="1.4" fill="#1e2030"/><rect x="4.7" y="4.4" width="1.6" height="4.2" fill="#1e2030"/></svg>
<div style="position:absolute;left:17.30px;top:148.31px;font-size:8.8px;line-height:8.8px;color:#242424;white-space:pre;font-weight:normal;-webkit-text-stroke:0.03px #242424;transform:scaleX(0.9428);transform-origin:left center">Information</div>
<div style="position:absolute;left:112.90px;top:148.31px;font-size:8.8px;line-height:8.8px;color:#242424;white-space:pre;font-weight:normal;-webkit-text-stroke:0.03px #242424;transform:scaleX(0.9964);transform-origin:left center">12/7/2022</div>
<div style="position:absolute;left:169.30px;top:148.31px;font-size:8.8px;line-height:8.8px;color:#242424;white-space:pre;font-weight:normal;-webkit-text-stroke:0.03px #242424;transform:scaleX(0.9660);transform-origin:left center">5:31:44 AM</div>
<div style="position:absolute;right:756.20px;top:148.31px;font-size:8.8px;line-height:8.8px;color:#242424;white-space:pre;transform:scaleX(0.95);transform-origin:right center;-webkit-text-stroke:0.03px #242424;">1</div>
<div style="position:absolute;left:272.5px;top:147.31px;width:69px;overflow:hidden;font-size:8.8px;line-height:10.8px;height:10.8px;color:#242424;white-space:pre;"><div style="transform:scaleX(0.92);transform-origin:left center;-webkit-text-stroke:0.03px #242424;">Microsoft-Windows</div></div>
<div style="position:absolute;left:344.4px;top:147.31px;width:79.5px;overflow:hidden;font-size:8.8px;line-height:10.8px;height:10.8px;color:#242424;white-space:pre;"><div style="transform:scaleX(0.92);transform-origin:left center;-webkit-text-stroke:0.03px #242424;">Process Create (rule: </div></div>
<div style="position:absolute;left:427.00px;top:148.31px;font-size:8.8px;line-height:8.8px;color:#242424;white-space:pre;font-weight:normal;-webkit-text-stroke:0.03px #242424;transform:scaleX(0.8544);transform-origin:left center">\SYSTEM</div>
<div style="position:absolute;left:507.00px;top:148.31px;font-size:8.8px;line-height:8.8px;color:#242424;white-space:pre;transform:scaleX(0.93);transform-origin:left center;-webkit-text-stroke:0.03px #242424;">mal</div>
<div style="position:absolute;left:1px;top:170.79999999999998px;width:598.6px;height:0.8px;background:#d4d4d4"></div>
<div style="position:absolute;left:110.1px;top:158.82999999999998px;width:0.8px;height:12.67px;background:#e2e2e2"></div>
<div style="position:absolute;left:167.29999999999998px;top:158.82999999999998px;width:0.8px;height:12.67px;background:#e2e2e2"></div>
<div style="position:absolute;left:213.0px;top:158.82999999999998px;width:0.8px;height:12.67px;background:#e2e2e2"></div>
<div style="position:absolute;left:269.6px;top:158.82999999999998px;width:0.8px;height:12.67px;background:#e2e2e2"></div>
<div style="position:absolute;left:342.20000000000005px;top:158.82999999999998px;width:0.8px;height:12.67px;background:#e2e2e2"></div>
<div style="position:absolute;left:424.1px;top:158.82999999999998px;width:0.8px;height:12.67px;background:#e2e2e2"></div>
<div style="position:absolute;left:504.0px;top:158.82999999999998px;width:0.8px;height:12.67px;background:#e2e2e2"></div>
<div style="position:absolute;left:599.2px;top:158.82999999999998px;width:0.8px;height:12.67px;background:#dedede"></div>
<svg style="position:absolute;left:1.6px;top:160.03px" width="11" height="11" viewBox="0 0 11 11"><circle cx="5.5" cy="5.3" r="4.7" fill="#fff" stroke="#555" stroke-width="1"/><rect x="4.7" y="2.3" width="1.6" height="1.4" fill="#1e2030"/><rect x="4.7" y="4.4" width="1.6" height="4.2" fill="#1e2030"/></svg>
<div style="position:absolute;left:17.30px;top:160.98px;font-size:8.8px;line-height:8.8px;color:#242424;white-space:pre;font-weight:normal;-webkit-text-stroke:0.03px #242424;transform:scaleX(0.9428);transform-origin:left center">Information</div>
<div style="position:absolute;left:112.90px;top:160.98px;font-size:8.8px;line-height:8.8px;color:#242424;white-space:pre;font-weight:normal;-webkit-text-stroke:0.03px #242424;transform:scaleX(0.9964);transform-origin:left center">12/7/2022</div>
<div style="position:absolute;left:169.30px;top:160.98px;font-size:8.8px;line-height:8.8px;color:#242424;white-space:pre;font-weight:normal;-webkit-text-stroke:0.03px #242424;transform:scaleX(0.9660);transform-origin:left center">5:31:39 AM</div>
<div style="position:absolute;right:756.20px;top:160.98px;font-size:8.8px;line-height:8.8px;color:#242424;white-space:pre;transform:scaleX(0.95);transform-origin:right center;-webkit-text-stroke:0.03px #242424;">5</div>
<div style="position:absolute;left:272.5px;top:159.98px;width:69px;overflow:hidden;font-size:8.8px;line-height:10.8px;height:10.8px;color:#242424;white-space:pre;"><div style="transform:scaleX(0.92);transform-origin:left center;-webkit-text-stroke:0.03px #242424;">Microsoft-Windows</div></div>
<div style="position:absolute;left:344.4px;top:159.98px;width:79.5px;overflow:hidden;font-size:8.8px;line-height:10.8px;height:10.8px;color:#242424;white-space:pre;"><div style="transform:scaleX(0.92);transform-origin:left center;-webkit-text-stroke:0.03px #242424;">Process terminated (r</div></div>
<div style="position:absolute;left:427.00px;top:160.98px;font-size:8.8px;line-height:8.8px;color:#242424;white-space:pre;font-weight:normal;-webkit-text-stroke:0.03px #242424;transform:scaleX(0.8544);transform-origin:left center">\SYSTEM</div>
<div style="position:absolute;left:507.00px;top:160.98px;font-size:8.8px;line-height:8.8px;color:#242424;white-space:pre;transform:scaleX(0.93);transform-origin:left center;-webkit-text-stroke:0.03px #242424;">mal</div>
<div style="position:absolute;left:1px;top:183.47px;width:598.6px;height:0.8px;background:#d4d4d4"></div>
<div style="position:absolute;left:110.1px;top:171.5px;width:0.8px;height:12.67px;background:#e2e2e2"></div>
<div style="position:absolute;left:167.29999999999998px;top:171.5px;width:0.8px;height:12.67px;background:#e2e2e2"></div>
<div style="position:absolute;left:213.0px;top:171.5px;width:0.8px;height:12.67px;background:#e2e2e2"></div>
<div style="position:absolute;left:269.6px;top:171.5px;width:0.8px;height:12.67px;background:#e2e2e2"></div>
<div style="position:absolute;left:342.20000000000005px;top:171.5px;width:0.8px;height:12.67px;background:#e2e2e2"></div>
<div style="position:absolute;left:424.1px;top:171.5px;width:0.8px;height:12.67px;background:#e2e2e2"></div>
<div style="position:absolute;left:504.0px;top:171.5px;width:0.8px;height:12.67px;background:#e2e2e2"></div>
<div style="position:absolute;left:599.2px;top:171.5px;width:0.8px;height:12.67px;background:#dedede"></div>
<svg style="position:absolute;left:1.6px;top:172.70px" width="11" height="11" viewBox="0 0 11 11"><circle cx="5.5" cy="5.3" r="4.7" fill="#fff" stroke="#555" stroke-width="1"/><rect x="4.7" y="2.3" width="1.6" height="1.4" fill="#1e2030"/><rect x="4.7" y="4.4" width="1.6" height="4.2" fill="#1e2030"/></svg>
<div style="position:absolute;left:17.30px;top:173.65px;font-size:8.8px;line-height:8.8px;color:#242424;white-space:pre;font-weight:normal;-webkit-text-stroke:0.03px #242424;transform:scaleX(0.9428);transform-origin:left center">Information</div>
<div style="position:absolute;left:112.90px;top:173.65px;font-size:8.8px;line-height:8.8px;color:#242424;white-space:pre;font-weight:normal;-webkit-text-stroke:0.03px #242424;transform:scaleX(0.9964);transform-origin:left center">12/7/2022</div>
<div style="position:absolute;left:169.30px;top:173.65px;font-size:8.8px;line-height:8.8px;color:#242424;white-space:pre;font-weight:normal;-webkit-text-stroke:0.03px #242424;transform:scaleX(0.9660);transform-origin:left center">5:31:34 AM</div>
<div style="position:absolute;right:756.20px;top:173.65px;font-size:8.8px;line-height:8.8px;color:#242424;white-space:pre;transform:scaleX(0.95);transform-origin:right center;-webkit-text-stroke:0.03px #242424;">5</div>
<div style="position:absolute;left:272.5px;top:172.65px;width:69px;overflow:hidden;font-size:8.8px;line-height:10.8px;height:10.8px;color:#242424;white-space:pre;"><div style="transform:scaleX(0.92);transform-origin:left center;-webkit-text-stroke:0.03px #242424;">Microsoft-Windows</div></div>
<div style="position:absolute;left:344.4px;top:172.65px;width:79.5px;overflow:hidden;font-size:8.8px;line-height:10.8px;height:10.8px;color:#242424;white-space:pre;"><div style="transform:scaleX(0.92);transform-origin:left center;-webkit-text-stroke:0.03px #242424;">Process terminated (r</div></div>
<div style="position:absolute;left:427.00px;top:173.65px;font-size:8.8px;line-height:8.8px;color:#242424;white-space:pre;font-weight:normal;-webkit-text-stroke:0.03px #242424;transform:scaleX(0.8544);transform-origin:left center">\SYSTEM</div>
<div style="position:absolute;left:507.00px;top:173.65px;font-size:8.8px;line-height:8.8px;color:#242424;white-space:pre;transform:scaleX(0.93);transform-origin:left center;-webkit-text-stroke:0.03px #242424;">mal</div>
<div style="position:absolute;left:1px;top:196.14000000000001px;width:598.6px;height:0.8px;background:#d4d4d4"></div>
<div style="position:absolute;left:110.1px;top:184.17000000000002px;width:0.8px;height:12.67px;background:#e2e2e2"></div>
<div style="position:absolute;left:167.29999999999998px;top:184.17000000000002px;width:0.8px;height:12.67px;background:#e2e2e2"></div>
<div style="position:absolute;left:213.0px;top:184.17000000000002px;width:0.8px;height:12.67px;background:#e2e2e2"></div>
<div style="position:absolute;left:269.6px;top:184.17000000000002px;width:0.8px;height:12.67px;background:#e2e2e2"></div>
<div style="position:absolute;left:342.20000000000005px;top:184.17000000000002px;width:0.8px;height:12.67px;background:#e2e2e2"></div>
<div style="position:absolute;left:424.1px;top:184.17000000000002px;width:0.8px;height:12.67px;background:#e2e2e2"></div>
<div style="position:absolute;left:504.0px;top:184.17000000000002px;width:0.8px;height:12.67px;background:#e2e2e2"></div>
<div style="position:absolute;left:599.2px;top:184.17000000000002px;width:0.8px;height:12.67px;background:#dedede"></div>
<svg style="position:absolute;left:1.6px;top:185.37px" width="11" height="11" viewBox="0 0 11 11"><circle cx="5.5" cy="5.3" r="4.7" fill="#fff" stroke="#555" stroke-width="1"/><rect x="4.7" y="2.3" width="1.6" height="1.4" fill="#1e2030"/><rect x="4.7" y="4.4" width="1.6" height="4.2" fill="#1e2030"/></svg>
<div style="position:absolute;left:17.30px;top:186.32px;font-size:8.8px;line-height:8.8px;color:#242424;white-space:pre;font-weight:normal;-webkit-text-stroke:0.03px #242424;transform:scaleX(0.9428);transform-origin:left center">Information</div>
<div style="position:absolute;left:112.90px;top:186.32px;font-size:8.8px;line-height:8.8px;color:#242424;white-space:pre;font-weight:normal;-webkit-text-stroke:0.03px #242424;transform:scaleX(0.9964);transform-origin:left center">12/7/2022</div>
<div style="position:absolute;left:169.30px;top:186.32px;font-size:8.8px;line-height:8.8px;color:#242424;white-space:pre;font-weight:normal;-webkit-text-stroke:0.03px #242424;transform:scaleX(0.9660);transform-origin:left center">5:31:33 AM</div>
<div style="position:absolute;right:756.20px;top:186.32px;font-size:8.8px;line-height:8.8px;color:#242424;white-space:pre;transform:scaleX(0.95);transform-origin:right center;-webkit-text-stroke:0.03px #242424;">1</div>
<div style="position:absolute;left:272.5px;top:185.32px;width:69px;overflow:hidden;font-size:8.8px;line-height:10.8px;height:10.8px;color:#242424;white-space:pre;"><div style="transform:scaleX(0.92);transform-origin:left center;-webkit-text-stroke:0.03px #242424;">Microsoft-Windows</div></div>
<div style="position:absolute;left:344.4px;top:185.32px;width:79.5px;overflow:hidden;font-size:8.8px;line-height:10.8px;height:10.8px;color:#242424;white-space:pre;"><div style="transform:scaleX(0.92);transform-origin:left center;-webkit-text-stroke:0.03px #242424;">Process Create (rule: </div></div>
<div style="position:absolute;left:427.00px;top:186.32px;font-size:8.8px;line-height:8.8px;color:#242424;white-space:pre;font-weight:normal;-webkit-text-stroke:0.03px #242424;transform:scaleX(0.8544);transform-origin:left center">\SYSTEM</div>
<div style="position:absolute;left:507.00px;top:186.32px;font-size:8.8px;line-height:8.8px;color:#242424;white-space:pre;transform:scaleX(0.93);transform-origin:left center;-webkit-text-stroke:0.03px #242424;">mal</div>
<div style="position:absolute;left:1px;top:208.80999999999997px;width:598.6px;height:0.8px;background:#d4d4d4"></div>
<div style="position:absolute;left:110.1px;top:196.83999999999997px;width:0.8px;height:12.67px;background:#e2e2e2"></div>
<div style="position:absolute;left:167.29999999999998px;top:196.83999999999997px;width:0.8px;height:12.67px;background:#e2e2e2"></div>
<div style="position:absolute;left:213.0px;top:196.83999999999997px;width:0.8px;height:12.67px;background:#e2e2e2"></div>
<div style="position:absolute;left:269.6px;top:196.83999999999997px;width:0.8px;height:12.67px;background:#e2e2e2"></div>
<div style="position:absolute;left:342.20000000000005px;top:196.83999999999997px;width:0.8px;height:12.67px;background:#e2e2e2"></div>
<div style="position:absolute;left:424.1px;top:196.83999999999997px;width:0.8px;height:12.67px;background:#e2e2e2"></div>
<div style="position:absolute;left:504.0px;top:196.83999999999997px;width:0.8px;height:12.67px;background:#e2e2e2"></div>
<div style="position:absolute;left:599.2px;top:196.83999999999997px;width:0.8px;height:12.67px;background:#dedede"></div>
<svg style="position:absolute;left:1.6px;top:198.04px" width="11" height="11" viewBox="0 0 11 11"><circle cx="5.5" cy="5.3" r="4.7" fill="#fff" stroke="#555" stroke-width="1"/><rect x="4.7" y="2.3" width="1.6" height="1.4" fill="#1e2030"/><rect x="4.7" y="4.4" width="1.6" height="4.2" fill="#1e2030"/></svg>
<div style="position:absolute;left:17.30px;top:198.99px;font-size:8.8px;line-height:8.8px;color:#242424;white-space:pre;font-weight:normal;-webkit-text-stroke:0.03px #242424;transform:scaleX(0.9428);transform-origin:left center">Information</div>
<div style="position:absolute;left:112.90px;top:198.99px;font-size:8.8px;line-height:8.8px;color:#242424;white-space:pre;font-weight:normal;-webkit-text-stroke:0.03px #242424;transform:scaleX(0.9964);transform-origin:left center">12/7/2022</div>
<div style="position:absolute;left:169.30px;top:198.99px;font-size:8.8px;line-height:8.8px;color:#242424;white-space:pre;font-weight:normal;-webkit-text-stroke:0.03px #242424;transform:scaleX(0.9660);transform-origin:left center">5:31:33 AM</div>
<div style="position:absolute;right:756.20px;top:198.99px;font-size:8.8px;line-height:8.8px;color:#242424;white-space:pre;transform:scaleX(0.95);transform-origin:right center;-webkit-text-stroke:0.03px #242424;">1</div>
<div style="position:absolute;left:272.5px;top:197.99px;width:69px;overflow:hidden;font-size:8.8px;line-height:10.8px;height:10.8px;color:#242424;white-space:pre;"><div style="transform:scaleX(0.92);transform-origin:left center;-webkit-text-stroke:0.03px #242424;">Microsoft-Windows</div></div>
<div style="position:absolute;left:344.4px;top:197.99px;width:79.5px;overflow:hidden;font-size:8.8px;line-height:10.8px;height:10.8px;color:#242424;white-space:pre;"><div style="transform:scaleX(0.92);transform-origin:left center;-webkit-text-stroke:0.03px #242424;">Process Create (rule: </div></div>
<div style="position:absolute;left:427.00px;top:198.99px;font-size:8.8px;line-height:8.8px;color:#242424;white-space:pre;font-weight:normal;-webkit-text-stroke:0.03px #242424;transform:scaleX(0.8544);transform-origin:left center">\SYSTEM</div>
<div style="position:absolute;left:507.00px;top:198.99px;font-size:8.8px;line-height:8.8px;color:#242424;white-space:pre;transform:scaleX(0.93);transform-origin:left center;-webkit-text-stroke:0.03px #242424;">mal</div>
<div style="position:absolute;left:1px;top:221.48px;width:598.6px;height:0.8px;background:#d4d4d4"></div>
<div style="position:absolute;left:110.1px;top:209.51px;width:0.8px;height:12.67px;background:#e2e2e2"></div>
<div style="position:absolute;left:167.29999999999998px;top:209.51px;width:0.8px;height:12.67px;background:#e2e2e2"></div>
<div style="position:absolute;left:213.0px;top:209.51px;width:0.8px;height:12.67px;background:#e2e2e2"></div>
<div style="position:absolute;left:269.6px;top:209.51px;width:0.8px;height:12.67px;background:#e2e2e2"></div>
<div style="position:absolute;left:342.20000000000005px;top:209.51px;width:0.8px;height:12.67px;background:#e2e2e2"></div>
<div style="position:absolute;left:424.1px;top:209.51px;width:0.8px;height:12.67px;background:#e2e2e2"></div>
<div style="position:absolute;left:504.0px;top:209.51px;width:0.8px;height:12.67px;background:#e2e2e2"></div>
<div style="position:absolute;left:599.2px;top:209.51px;width:0.8px;height:12.67px;background:#dedede"></div>
<svg style="position:absolute;left:1.6px;top:210.71px" width="11" height="11" viewBox="0 0 11 11"><circle cx="5.5" cy="5.3" r="4.7" fill="#fff" stroke="#555" stroke-width="1"/><rect x="4.7" y="2.3" width="1.6" height="1.4" fill="#1e2030"/><rect x="4.7" y="4.4" width="1.6" height="4.2" fill="#1e2030"/></svg>
<div style="position:absolute;left:17.30px;top:211.66px;font-size:8.8px;line-height:8.8px;color:#242424;white-space:pre;font-weight:normal;-webkit-text-stroke:0.03px #242424;transform:scaleX(0.9428);transform-origin:left center">Information</div>
<div style="position:absolute;left:112.90px;top:211.66px;font-size:8.8px;line-height:8.8px;color:#242424;white-space:pre;font-weight:normal;-webkit-text-stroke:0.03px #242424;transform:scaleX(0.9964);transform-origin:left center">12/7/2022</div>
<div style="position:absolute;left:169.30px;top:211.66px;font-size:8.8px;line-height:8.8px;color:#242424;white-space:pre;font-weight:normal;-webkit-text-stroke:0.03px #242424;transform:scaleX(0.9660);transform-origin:left center">5:31:33 AM</div>
<div style="position:absolute;right:756.20px;top:211.66px;font-size:8.8px;line-height:8.8px;color:#242424;white-space:pre;transform:scaleX(0.95);transform-origin:right center;-webkit-text-stroke:0.03px #242424;">4</div>
<div style="position:absolute;left:272.5px;top:210.66px;width:69px;overflow:hidden;font-size:8.8px;line-height:10.8px;height:10.8px;color:#242424;white-space:pre;"><div style="transform:scaleX(0.92);transform-origin:left center;-webkit-text-stroke:0.03px #242424;">Microsoft-Windows</div></div>
<div style="position:absolute;left:344.4px;top:210.66px;width:79.5px;overflow:hidden;font-size:8.8px;line-height:10.8px;height:10.8px;color:#242424;white-space:pre;"><div style="transform:scaleX(0.92);transform-origin:left center;-webkit-text-stroke:0.03px #242424;">Sysmon service state </div></div>
<div style="position:absolute;left:427.00px;top:211.66px;font-size:8.8px;line-height:8.8px;color:#242424;white-space:pre;font-weight:normal;-webkit-text-stroke:0.03px #242424;transform:scaleX(0.8544);transform-origin:left center">\SYSTEM</div>
<div style="position:absolute;left:507.00px;top:211.66px;font-size:8.8px;line-height:8.8px;color:#242424;white-space:pre;transform:scaleX(0.93);transform-origin:left center;-webkit-text-stroke:0.03px #242424;">mal</div>
<div style="position:absolute;left:1px;top:234.15px;width:598.6px;height:0.8px;background:#d4d4d4"></div>
<div style="position:absolute;left:110.1px;top:222.18px;width:0.8px;height:12.67px;background:#e2e2e2"></div>
<div style="position:absolute;left:167.29999999999998px;top:222.18px;width:0.8px;height:12.67px;background:#e2e2e2"></div>
<div style="position:absolute;left:213.0px;top:222.18px;width:0.8px;height:12.67px;background:#e2e2e2"></div>
<div style="position:absolute;left:269.6px;top:222.18px;width:0.8px;height:12.67px;background:#e2e2e2"></div>
<div style="position:absolute;left:342.20000000000005px;top:222.18px;width:0.8px;height:12.67px;background:#e2e2e2"></div>
<div style="position:absolute;left:424.1px;top:222.18px;width:0.8px;height:12.67px;background:#e2e2e2"></div>
<div style="position:absolute;left:504.0px;top:222.18px;width:0.8px;height:12.67px;background:#e2e2e2"></div>
<div style="position:absolute;left:599.2px;top:222.18px;width:0.8px;height:12.67px;background:#dedede"></div>
<svg style="position:absolute;left:1.6px;top:223.38px" width="11" height="11" viewBox="0 0 11 11"><circle cx="5.5" cy="5.3" r="4.7" fill="#fff" stroke="#555" stroke-width="1"/><rect x="4.7" y="2.3" width="1.6" height="1.4" fill="#1e2030"/><rect x="4.7" y="4.4" width="1.6" height="4.2" fill="#1e2030"/></svg>
<div style="position:absolute;left:17.30px;top:224.33px;font-size:8.8px;line-height:8.8px;color:#242424;white-space:pre;font-weight:normal;-webkit-text-stroke:0.03px #242424;transform:scaleX(0.9428);transform-origin:left center">Information</div>
<div style="position:absolute;left:112.90px;top:224.33px;font-size:8.8px;line-height:8.8px;color:#242424;white-space:pre;font-weight:normal;-webkit-text-stroke:0.03px #242424;transform:scaleX(0.9964);transform-origin:left center">12/7/2022</div>
<div style="position:absolute;left:169.30px;top:224.33px;font-size:8.8px;line-height:8.8px;color:#242424;white-space:pre;font-weight:normal;-webkit-text-stroke:0.03px #242424;transform:scaleX(0.9660);transform-origin:left center">5:31:32 AM</div>
<div style="position:absolute;right:756.20px;top:224.33px;font-size:8.8px;line-height:8.8px;color:#242424;white-space:pre;transform:scaleX(0.95);transform-origin:right center;-webkit-text-stroke:0.03px #242424;">16</div>
<div style="position:absolute;left:272.5px;top:223.33px;width:69px;overflow:hidden;font-size:8.8px;line-height:10.8px;height:10.8px;color:#242424;white-space:pre;"><div style="transform:scaleX(0.92);transform-origin:left center;-webkit-text-stroke:0.03px #242424;">Microsoft-Windows</div></div>
<div style="position:absolute;left:344.4px;top:223.33px;width:79.5px;overflow:hidden;font-size:8.8px;line-height:10.8px;height:10.8px;color:#242424;white-space:pre;"><div style="transform:scaleX(0.92);transform-origin:left center;-webkit-text-stroke:0.03px #242424;">Sysmon config state c</div></div>
<div style="position:absolute;left:427.00px;top:224.33px;font-size:8.8px;line-height:8.8px;color:#242424;white-space:pre;transform:scaleX(0.9);transform-origin:left center;-webkit-text-stroke:0.03px #242424;">mal\p1k4chu</div>
<div style="position:absolute;left:507.00px;top:224.33px;font-size:8.8px;line-height:8.8px;color:#242424;white-space:pre;transform:scaleX(0.93);transform-origin:left center;-webkit-text-stroke:0.03px #242424;">mal</div>
<div style="position:absolute;left:2px;top:105.9px;width:594.60px;height:12.00px;border:2px solid #dd1016;"></div>
<div style="position:absolute;left:1px;top:234.6px;width:598.6px;height:0.8px;background:#e4e4e4"></div>
<div style="position:absolute;left:1px;top:429.1px;width:1023px;height:0.8px;background:#ececec"></div>
<div style="position:absolute;left:3.30px;top:433.00px;font-size:8.5px;line-height:8.5px;color:#3c3c3c;white-space:pre;transform:scaleX(0.94);transform-origin:left center;-webkit-text-stroke:0.05px #3c3c3c;font-weight:bold">Description</div>
<div style="position:absolute;left:0px;top:444.3px;width:1024px;height:0.8px;background:#ebebeb"></div>
<div style="position:absolute;left:0px;top:445.4px;width:2.5px;height:318px;background:#f4f4f4"></div>
<div style="position:absolute;left:2.5px;top:446.8px;width:1021.5px;height:1.8px;background:linear-gradient(#d4d4d4,#bdbdbd)"></div>
<div style="position:absolute;left:2.5px;top:448px;width:1.4px;height:315px;background:#cbcbcb"></div>
<div style="position:absolute;left:5.10px;top:451.02px;font-size:8.6px;line-height:8.6px;color:#1e1e1e;white-space:pre;font-weight:normal;-webkit-text-stroke:0.03px #1e1e1e;transform:scaleX(0.9103);transform-origin:left center">Process Create:</div>
<div style="position:absolute;left:5.10px;top:460.35px;font-size:8.6px;line-height:8.6px;color:#1e1e1e;white-space:pre;font-weight:normal;-webkit-text-stroke:0.03px #1e1e1e;transform:scaleX(0.8850);transform-origin:left center">RuleName: -</div>
<div style="position:absolute;left:5.10px;top:469.68px;font-size:8.6px;line-height:8.6px;color:#1e1e1e;white-space:pre;font-weight:normal;-webkit-text-stroke:0.03px #1e1e1e;transform:scaleX(0.9822);transform-origin:left center">UtcTime: 2022-12-07 05:31:44.133</div>
<div style="position:absolute;left:5.10px;top:479.01px;font-size:8.6px;line-height:8.6px;color:#1e1e1e;white-space:pre;font-weight:normal;-webkit-text-stroke:0.03px #1e1e1e;transform:scaleX(0.9697);transform-origin:left center">ProcessGuid: {23b401e6-2540-6390-f701-000000000700}</div>
<div style="position:absolute;left:5.10px;top:488.34px;font-size:8.6px;line-height:8.6px;color:#1e1e1e;white-space:pre;font-weight:normal;-webkit-text-stroke:0.03px #1e1e1e;transform:scaleX(0.9374);transform-origin:left center">ProcessId: 10092</div>
<div style="position:absolute;left:5.10px;top:497.67px;font-size:8.6px;line-height:8.6px;color:#1e1e1e;white-space:pre;font-weight:normal;-webkit-text-stroke:0.03px #1e1e1e;transform:scaleX(0.9677);transform-origin:left center">Image: C:\Windows\System32\WerFault.exe</div>
<div style="position:absolute;left:5.10px;top:507.00px;font-size:8.6px;line-height:8.6px;color:#1e1e1e;white-space:pre;font-weight:normal;-webkit-text-stroke:0.03px #1e1e1e;transform:scaleX(0.9622);transform-origin:left center">FileVersion: 10.0.19041.1949 (WinBuild.160101.0800)</div>
<div style="position:absolute;left:5.10px;top:516.33px;font-size:8.6px;line-height:8.6px;color:#1e1e1e;white-space:pre;font-weight:normal;-webkit-text-stroke:0.03px #1e1e1e;transform:scaleX(0.9459);transform-origin:left center">Description: Windows Problem Reporting</div>
<div style="position:absolute;left:5.10px;top:525.66px;font-size:8.6px;line-height:8.6px;color:#1e1e1e;white-space:pre;font-weight:normal;-webkit-text-stroke:0.03px #1e1e1e;transform:scaleX(0.9719);transform-origin:left center">Product: Microsoft® Windows® Operating System</div>
<div style="position:absolute;left:5.10px;top:534.99px;font-size:8.6px;line-height:8.6px;color:#1e1e1e;white-space:pre;font-weight:normal;-webkit-text-stroke:0.03px #1e1e1e;transform:scaleX(0.9329);transform-origin:left center">Company: Microsoft Corporation</div>
<div style="position:absolute;left:5.10px;top:544.32px;font-size:8.6px;line-height:8.6px;color:#1e1e1e;white-space:pre;font-weight:normal;-webkit-text-stroke:0.03px #1e1e1e;transform:scaleX(0.9107);transform-origin:left center">OriginalFileName: WerFault.exe</div>
<div style="position:absolute;left:5.10px;top:553.65px;font-size:8.6px;line-height:8.6px;color:#1e1e1e;white-space:pre;font-weight:normal;-webkit-text-stroke:0.03px #1e1e1e;transform:scaleX(0.9642);transform-origin:left center">CommandLine: C:\Windows\system32\WerFault.exe -u -p 744 -ip 1112 -s 244</div>
<div style="position:absolute;left:5.10px;top:562.98px;font-size:8.6px;line-height:8.6px;color:#1e1e1e;white-space:pre;font-weight:normal;-webkit-text-stroke:0.03px #1e1e1e;transform:scaleX(0.9651);transform-origin:left center">CurrentDirectory: C:\Windows\system32\</div>
<div style="position:absolute;left:5.10px;top:572.31px;font-size:8.6px;line-height:8.6px;color:#1e1e1e;white-space:pre;font-weight:normal;-webkit-text-stroke:0.03px #1e1e1e;transform:scaleX(0.9149);transform-origin:left center">User: NT AUTHORITY\SYSTEM</div>
<div style="position:absolute;left:5.10px;top:581.64px;font-size:8.6px;line-height:8.6px;color:#1e1e1e;white-space:pre;font-weight:normal;-webkit-text-stroke:0.03px #1e1e1e;transform:scaleX(0.9670);transform-origin:left center">LogonGuid: {23b401e6-1ea0-6390-e703-000000000000}</div>
<div style="position:absolute;left:5.10px;top:590.97px;font-size:8.6px;line-height:8.6px;color:#1e1e1e;white-space:pre;font-weight:normal;-webkit-text-stroke:0.03px #1e1e1e;transform:scaleX(0.9702);transform-origin:left center">LogonId: 0x3e7</div>
<div style="position:absolute;left:5.10px;top:600.30px;font-size:8.6px;line-height:8.6px;color:#1e1e1e;white-space:pre;font-weight:normal;-webkit-text-stroke:0.03px #1e1e1e;transform:scaleX(0.9263);transform-origin:left center">TerminalSessionId: 2</div>
<div style="position:absolute;left:5.10px;top:609.63px;font-size:8.6px;line-height:8.6px;color:#1e1e1e;white-space:pre;font-weight:normal;-webkit-text-stroke:0.03px #1e1e1e;transform:scaleX(0.9687);transform-origin:left center">IntegrityLevel: System</div>
<div style="position:absolute;left:5.10px;top:618.96px;font-size:8.6px;line-height:8.6px;color:#1e1e1e;white-space:pre;font-weight:normal;-webkit-text-stroke:0.03px #1e1e1e;transform:scaleX(0.9105);transform-origin:left center">Hashes: SHA256=82E7105BC8DECC5D75630AD984C12BA67EBF00109AEAE739F4733F1E608B3B88</div>
<div style="position:absolute;left:5.10px;top:628.29px;font-size:8.6px;line-height:8.6px;color:#1e1e1e;white-space:pre;font-weight:normal;-webkit-text-stroke:0.03px #1e1e1e;transform:scaleX(0.9653);transform-origin:left center">ParentProcessGuid: {23b401e6-2540-6390-f501-000000000700}</div>
<div style="position:absolute;left:5.10px;top:637.62px;font-size:8.6px;line-height:8.6px;color:#1e1e1e;white-space:pre;font-weight:normal;-webkit-text-stroke:0.03px #1e1e1e;transform:scaleX(0.9506);transform-origin:left center">ParentProcessId: 1112</div>
<div style="position:absolute;left:5.10px;top:646.95px;font-size:8.6px;line-height:8.6px;color:#1e1e1e;white-space:pre;font-weight:normal;-webkit-text-stroke:0.03px #1e1e1e;transform:scaleX(0.9368);transform-origin:left center">ParentImage: C:\Users\p1k4chu\Downloads\Lsass-Shtinkering-main\Lsass-Shtinkering-main\x64\Debug\LSASS_Shtinkering.exe</div>
<div style="position:absolute;left:5.10px;top:656.28px;font-size:8.6px;line-height:8.6px;color:#1e1e1e;white-space:pre;font-weight:normal;-webkit-text-stroke:0.03px #1e1e1e;transform:scaleX(0.9222);transform-origin:left center">ParentCommandLine: LSASS_Shtinkering.exe</div>
<div style="position:absolute;left:5.10px;top:665.61px;font-size:8.6px;line-height:8.6px;color:#1e1e1e;white-space:pre;font-weight:normal;-webkit-text-stroke:0.03px #1e1e1e;transform:scaleX(0.9251);transform-origin:left center">ParentUser: NT AUTHORITY\SYSTEM</div>
<div style="position:absolute;left:2px;top:544px;width:305.00px;height:25.30px;border:2px solid #dd1016;"></div>
<div style="position:absolute;left:2px;top:636.3px;width:464.30px;height:15.50px;border:2px solid #dd1016;"></div>
<div style="position:absolute;left:2px;top:662.8px;width:139.30px;height:14.00px;border:2px solid #dd1016;"></div>
<div style="position:absolute;left:506.0px;top:321.7px;width:442.9px;height:394.40000000000003px;background:#fff;border:1px solid #b4b4b4;"></div>
<svg style="position:absolute;left:512px;top:327.6px" width="12" height="10" viewBox="0 0 12 10"><rect x="2.4" y="0.5" width="9" height="6.6" rx="0.6" fill="#d4e8f2" stroke="#8fb2c6" stroke-width="0.9"/><path d="M3 4.6 L5 3 L6.6 4.8 L8.4 2 L10.8 4" stroke="#4f7f9f" stroke-width="0.9" fill="none"/><rect x="5.6" y="7.4" width="3" height="1" fill="#9fb4c0"/><rect x="4.4" y="8.4" width="5.4" height="0.9" fill="#9fb4c0"/><rect x="0.3" y="3.4" width="1.3" height="5.8" fill="#6d8a7a"/></svg>
<div style="position:absolute;left:526.10px;top:327.62px;font-size:8.6px;line-height:8.6px;color:#1a1a1a;white-space:pre;letter-spacing:0px;transform:scaleX(0.87);transform-origin:left center;-webkit-text-stroke:0.03px #1a1a1a;">Task Manager</div>
<div style="position:absolute;left:870.5px;top:331.3px;width:6.5px;height:1px;background:#3a3a3a"></div>
<div style="position:absolute;left:900.3px;top:328.2px;width:5.6px;height:5.8px;border:1.1px solid #333"></div>
<svg style="position:absolute;left:930.3px;top:327.6px" width="8.5" height="8.5" viewBox="0 0 8.5 8.5"><path d="M0.7 0.7 L7.8 7.8 M7.8 0.7 L0.7 7.8" stroke="#333" stroke-width="1"/></svg>
<div style="position:absolute;left:512.30px;top:344.32px;font-size:8.6px;line-height:8.6px;color:#1a1a1a;white-space:pre;letter-spacing:0px;transform:scaleX(0.88);transform-origin:left center;-webkit-text-stroke:0.03px #1a1a1a;">File</div>
<div style="position:absolute;left:533.30px;top:344.32px;font-size:8.6px;line-height:8.6px;color:#1a1a1a;white-space:pre;letter-spacing:0px;transform:scaleX(0.88);transform-origin:left center;-webkit-text-stroke:0.03px #1a1a1a;">Options</div>
<div style="position:absolute;left:570.20px;top:344.32px;font-size:8.6px;line-height:8.6px;color:#1a1a1a;white-space:pre;letter-spacing:0px;transform:scaleX(0.88);transform-origin:left center;-webkit-text-stroke:0.03px #1a1a1a;">View</div>
<div style="position:absolute;left:507.0px;top:354.8px;width:441.9px;height:0.6px;background:#f0f0f0"></div>
<div style="position:absolute;left:510.5px;top:358.3px;width:37.40000000000005px;height:13.4px;background:#ececec;border:0.6px solid #d9d9d9;border-bottom:none"></div>
<div style="position:absolute;left:549.5px;top:358.3px;width:51.7px;height:13.4px;background:#ececec;border:0.6px solid #d9d9d9;border-bottom:none"></div>
<div style="position:absolute;left:603px;top:358.3px;width:47.49999999999996px;height:13.4px;background:#ececec;border:0.6px solid #d9d9d9;border-bottom:none"></div>
<div style="position:absolute;left:652px;top:358.3px;width:31.2px;height:13.4px;background:#ececec;border:0.6px solid #d9d9d9;border-bottom:none"></div>
<div style="position:absolute;left:685px;top:358.3px;width:25.7px;height:13.4px;background:#ececec;border:0.6px solid #d9d9d9;border-bottom:none"></div>
<div style="position:absolute;left:745px;top:358.3px;width:32.59999999999998px;height:13.4px;background:#ececec;border:0.6px solid #d9d9d9;border-bottom:none"></div>
<div style="position:absolute;left:507.0px;top:371.8px;width:441.9px;height:0.7px;background:#d9d9d9"></div>
<div style="position:absolute;left:712px;top:357.6px;width:32.2px;height:15px;background:#fff;border:0.6px solid #d9d9d9;border-bottom:none"></div>
<div style="position:absolute;left:512.00px;top:361.62px;font-size:8.6px;line-height:8.6px;color:#1a1a1a;white-space:pre;font-weight:normal;-webkit-text-stroke:0.03px #1a1a1a;transform:scaleX(0.8399);transform-origin:left center">Processes</div>
<div style="position:absolute;left:554.20px;top:361.62px;font-size:8.6px;line-height:8.6px;color:#1a1a1a;white-space:pre;font-weight:normal;-webkit-text-stroke:0.03px #1a1a1a;transform:scaleX(0.9146);transform-origin:left center">Performance</div>
<div style="position:absolute;left:607.50px;top:361.62px;font-size:8.6px;line-height:8.6px;color:#1a1a1a;white-space:pre;font-weight:normal;-webkit-text-stroke:0.03px #1a1a1a;transform:scaleX(0.9349);transform-origin:left center">App history</div>
<div style="position:absolute;left:656.20px;top:361.62px;font-size:8.6px;line-height:8.6px;color:#1a1a1a;white-space:pre;font-weight:normal;-webkit-text-stroke:0.03px #1a1a1a;transform:scaleX(0.8875);transform-origin:left center">Startup</div>
<div style="position:absolute;left:689.60px;top:361.62px;font-size:8.6px;line-height:8.6px;color:#1a1a1a;white-space:pre;font-weight:normal;-webkit-text-stroke:0.03px #1a1a1a;transform:scaleX(0.8150);transform-origin:left center">Users</div>
<div style="position:absolute;left:747.50px;top:361.62px;font-size:8.6px;line-height:8.6px;color:#1a1a1a;white-space:pre;font-weight:normal;-webkit-text-stroke:0.03px #1a1a1a;transform:scaleX(0.8406);transform-origin:left center">Services</div>
<div style="position:absolute;left:716.40px;top:360.52px;font-size:8.6px;line-height:8.6px;color:#1a1a1a;white-space:pre;font-weight:normal;-webkit-text-stroke:0.03px #1a1a1a;transform:scaleX(0.8713);transform-origin:left center">Details</div>
<div style="position:absolute;left:507.0px;top:380.0px;width:442.4px;height:1px;background:#d0d0d0"></div>
<div style="position:absolute;left:514.40px;top:384.92px;font-size:8.6px;line-height:8.6px;color:#2b2b2b;white-space:pre;letter-spacing:0px;transform:scaleX(0.88);transform-origin:left center;-webkit-text-stroke:0.03px #2b2b2b;">Name</div>
<div style="position:absolute;left:608.00px;top:384.92px;font-size:8.6px;line-height:8.6px;color:#2b2b2b;white-space:pre;letter-spacing:0px;transform:scaleX(0.88);transform-origin:left center;-webkit-text-stroke:0.03px #2b2b2b;">PID</div>
<div style="position:absolute;left:641.70px;top:384.92px;font-size:8.6px;line-height:8.6px;color:#2b2b2b;white-space:pre;letter-spacing:0px;transform:scaleX(0.88);transform-origin:left center;-webkit-text-stroke:0.03px #2b2b2b;">Status</div>
<div style="position:absolute;left:742.50px;top:384.92px;font-size:8.6px;line-height:8.6px;color:#2b2b2b;white-space:pre;letter-spacing:0px;transform:scaleX(0.88);transform-origin:left center;-webkit-text-stroke:0.03px #2b2b2b;">User name</div>
<div style="position:absolute;right:209.60px;top:384.92px;font-size:8.6px;line-height:8.6px;color:#2b2b2b;white-space:pre;letter-spacing:0px;transform:scaleX(0.88);transform-origin:right center;-webkit-text-stroke:0.03px #2b2b2b;">CPU</div>
<div style="position:absolute;left:823.00px;top:384.92px;font-size:8.6px;line-height:8.6px;color:#2b2b2b;white-space:pre;letter-spacing:0px;transform:scaleX(0.88);transform-origin:left center;-webkit-text-stroke:0.03px #2b2b2b;">Memory (a...</div>
<div style="position:absolute;left:876.00px;top:384.92px;font-size:8.6px;line-height:8.6px;color:#2b2b2b;white-space:pre;letter-spacing:0px;transform:scaleX(0.88);transform-origin:left center;-webkit-text-stroke:0.03px #2b2b2b;">UAC virtualizat...</div>
<div style="position:absolute;left:603.4px;top:381px;width:0.8px;height:16px;background:#e8e8e8"></div>
<div style="position:absolute;left:603.4px;top:397px;width:0.8px;height:287px;background:#f5f5f5"></div>
<div style="position:absolute;left:636px;top:381px;width:0.8px;height:16px;background:#e8e8e8"></div>
<div style="position:absolute;left:636px;top:397px;width:0.8px;height:287px;background:#f5f5f5"></div>
<div style="position:absolute;left:738.6px;top:381px;width:0.8px;height:16px;background:#e8e8e8"></div>
<div style="position:absolute;left:738.6px;top:397px;width:0.8px;height:287px;background:#f5f5f5"></div>
<div style="position:absolute;left:791px;top:381px;width:0.8px;height:16px;background:#e8e8e8"></div>
<div style="position:absolute;left:791px;top:397px;width:0.8px;height:287px;background:#f5f5f5"></div>
<div style="position:absolute;left:817.5px;top:381px;width:0.8px;height:16px;background:#e8e8e8"></div>
<div style="position:absolute;left:817.5px;top:397px;width:0.8px;height:287px;background:#f5f5f5"></div>
<div style="position:absolute;left:871.4px;top:381px;width:0.8px;height:16px;background:#e8e8e8"></div>
<div style="position:absolute;left:871.4px;top:397px;width:0.8px;height:287px;background:#f5f5f5"></div>
<svg style="position:absolute;left:551px;top:378.6px" width="8" height="5" viewBox="0 0 8 5"><path d="M1 4 L4 1.2 L7 4" stroke="#8a8a8a" stroke-width="0.8" fill="none"/></svg>
<div style="position:absolute;left:938.7px;top:381px;width:11.2px;height:12px;background:linear-gradient(#fbfbfb,#f3f3f3)"></div>
<div style="position:absolute;left:938.7px;top:393px;width:11.2px;height:291.2px;background:#f0f0f0"></div>
<div style="position:absolute;left:939.6px;top:431px;width:9.4px;height:31.2px;background:#cdcdcd"></div>
<svg style="position:absolute;left:940.2px;top:383.6px" width="8" height="6" viewBox="0 0 8 6"><path d="M1.7 4.6 L4 2.3 L6.3 4.6" stroke="#505050" stroke-width="1.1" fill="none"/></svg>
<svg style="position:absolute;left:940.3px;top:675.6px" width="8" height="6" viewBox="0 0 8 6"><path d="M1.2 1.5 L4 4.2 L6.8 1.5" stroke="#5a5a5a" stroke-width="1.1" fill="none"/></svg>
<div style="position:absolute;left:507.5px;top:397.5px;width:431.2px;height:286.7px;overflow:hidden">
<svg width="0" height="0" style="position:absolute"><defs><linearGradient id="ebl" x1="0.2" y1="0" x2="0.6" y2="1"><stop offset="0" stop-color="#35a6ee"/><stop offset="0.5" stop-color="#1677cf"/><stop offset="1" stop-color="#0b3d7e"/></linearGradient><linearGradient id="egr" x1="0" y1="0" x2="1" y2="0.7"><stop offset="0" stop-color="#38bcc8"/><stop offset="1" stop-color="#4ccf6e"/></linearGradient></defs></svg>
<div style="position:absolute;left:2.6999999999999886px;top:2.05px;width:8.6px;height:6.2px;border:0.9px solid #8a8a8a;background:#f6f6f6"></div>
<div style="position:absolute;left:4.899999999999977px;top:3.85px;width:2.4px;height:3.6px;background:#1a6cb5"></div>
<div style="position:absolute;left:7.7999999999999545px;top:3.85px;width:2.8px;height:3.6px;background:#c9def0"></div>
<div style="position:absolute;left:14.50px;top:2.47px;font-size:8.6px;line-height:8.6px;color:#1a1a1a;white-space:pre;letter-spacing:0px;-webkit-text-stroke:0.03px #1a1a1a;transform:scaleX(0.92);transform-origin:left center">LogonUI.exe</div>
<div style="position:absolute;left:100.50px;top:2.47px;font-size:8.6px;line-height:8.6px;color:#1a1a1a;white-space:pre;letter-spacing:0px;-webkit-text-stroke:0.03px #1a1a1a;transform:scaleX(0.85);transform-origin:left center">468</div>
<div style="position:absolute;left:134.20px;top:2.47px;font-size:8.6px;line-height:8.6px;color:#1a1a1a;white-space:pre;letter-spacing:0px;-webkit-text-stroke:0.03px #1a1a1a;transform:scaleX(0.93);transform-origin:left center">Running</div>
<div style="position:absolute;left:235.00px;top:2.47px;font-size:8.6px;line-height:8.6px;color:#1a1a1a;white-space:pre;letter-spacing:0px;-webkit-text-stroke:0.03px #1a1a1a;transform:scaleX(0.8);transform-origin:left center">SYSTEM</div>
<div style="position:absolute;right:127.20px;top:2.47px;font-size:8.6px;line-height:8.6px;color:#1a1a1a;white-space:pre;letter-spacing:0px;-webkit-text-stroke:0.03px #1a1a1a;transform:scaleX(0.85);transform-origin:right center">00</div>
<div style="position:absolute;right:71.80px;top:2.47px;font-size:8.6px;line-height:8.6px;color:#1a1a1a;white-space:pre;letter-spacing:0px;-webkit-text-stroke:0.03px #1a1a1a;transform:scaleX(0.83);transform-origin:right center">5,632 K</div>
<div style="position:absolute;left:368.50px;top:2.47px;font-size:8.6px;line-height:8.6px;color:#1a1a1a;white-space:pre;letter-spacing:0px;-webkit-text-stroke:0.03px #1a1a1a;transform:scaleX(0.95);transform-origin:left center">Not allowed</div>
<div style="position:absolute;left:0.80px;top:11.95px;width:428.8px;height:10.8px;background:#cce8ff;border:0.8px solid #99d1ff"></div>
<div style="position:absolute;left:2.6999999999999886px;top:14.75px;width:8.6px;height:6.2px;border:0.9px solid #8a8a8a;background:#f6f6f6"></div>
<div style="position:absolute;left:4.899999999999977px;top:16.55px;width:2.4px;height:3.6px;background:#1a6cb5"></div>
<div style="position:absolute;left:7.7999999999999545px;top:16.55px;width:2.8px;height:3.6px;background:#c9def0"></div>
<div style="position:absolute;left:14.50px;top:15.17px;font-size:8.6px;line-height:8.6px;color:#1a1a1a;white-space:pre;letter-spacing:0px;-webkit-text-stroke:0.03px #1a1a1a;transform:scaleX(0.92);transform-origin:left center">lsass.exe</div>
<div style="position:absolute;left:100.50px;top:15.17px;font-size:8.6px;line-height:8.6px;color:#1a1a1a;white-space:pre;letter-spacing:0px;-webkit-text-stroke:0.03px #1a1a1a;transform:scaleX(0.85);transform-origin:left center">744</div>
<div style="position:absolute;left:134.20px;top:15.17px;font-size:8.6px;line-height:8.6px;color:#1a1a1a;white-space:pre;letter-spacing:0px;-webkit-text-stroke:0.03px #1a1a1a;transform:scaleX(0.93);transform-origin:left center">Running</div>
<div style="position:absolute;left:235.00px;top:15.17px;font-size:8.6px;line-height:8.6px;color:#1a1a1a;white-space:pre;letter-spacing:0px;-webkit-text-stroke:0.03px #1a1a1a;transform:scaleX(0.8);transform-origin:left center">SYSTEM</div>
<div style="position:absolute;right:127.20px;top:15.17px;font-size:8.6px;line-height:8.6px;color:#1a1a1a;white-space:pre;letter-spacing:0px;-webkit-text-stroke:0.03px #1a1a1a;transform:scaleX(0.85);transform-origin:right center">00</div>
<div style="position:absolute;right:71.80px;top:15.17px;font-size:8.6px;line-height:8.6px;color:#1a1a1a;white-space:pre;letter-spacing:0px;-webkit-text-stroke:0.03px #1a1a1a;transform:scaleX(0.83);transform-origin:right center">5,116 K</div>
<div style="position:absolute;left:368.50px;top:15.17px;font-size:8.6px;line-height:8.6px;color:#1a1a1a;white-space:pre;letter-spacing:0px;-webkit-text-stroke:0.03px #1a1a1a;transform:scaleX(0.95);transform-origin:left center">Not allowed</div>
<div style="position:absolute;left:2.6999999999999886px;top:27.45px;width:8.6px;height:6.2px;border:0.9px solid #8a8a8a;background:#f6f6f6"></div>
<div style="position:absolute;left:4.899999999999977px;top:29.25px;width:2.4px;height:3.6px;background:#1a6cb5"></div>
<div style="position:absolute;left:7.7999999999999545px;top:29.25px;width:2.8px;height:3.6px;background:#c9def0"></div>
<div style="position:absolute;left:14.50px;top:27.87px;font-size:8.6px;line-height:8.6px;color:#1a1a1a;white-space:pre;letter-spacing:0px;-webkit-text-stroke:0.03px #1a1a1a;transform:scaleX(0.92);transform-origin:left center">Microsoft.ServiceHu...</div>
<div style="position:absolute;left:100.50px;top:27.87px;font-size:8.6px;line-height:8.6px;color:#1a1a1a;white-space:pre;letter-spacing:0px;-webkit-text-stroke:0.03px #1a1a1a;transform:scaleX(0.85);transform-origin:left center">7192</div>
<div style="position:absolute;left:134.20px;top:27.87px;font-size:8.6px;line-height:8.6px;color:#1a1a1a;white-space:pre;letter-spacing:0px;-webkit-text-stroke:0.03px #1a1a1a;transform:scaleX(0.93);transform-origin:left center">Running</div>
<div style="position:absolute;left:235.00px;top:27.87px;font-size:8.6px;line-height:8.6px;color:#1a1a1a;white-space:pre;letter-spacing:0px;-webkit-text-stroke:0.03px #1a1a1a;transform:scaleX(0.91);transform-origin:left center">p1k4chu</div>
<div style="position:absolute;right:127.20px;top:27.87px;font-size:8.6px;line-height:8.6px;color:#1a1a1a;white-space:pre;letter-spacing:0px;-webkit-text-stroke:0.03px #1a1a1a;transform:scaleX(0.85);transform-origin:right center">00</div>
<div style="position:absolute;right:71.80px;top:27.87px;font-size:8.6px;line-height:8.6px;color:#1a1a1a;white-space:pre;letter-spacing:0px;-webkit-text-stroke:0.03px #1a1a1a;transform:scaleX(0.83);transform-origin:right center">17,152 K</div>
<div style="position:absolute;left:368.50px;top:27.87px;font-size:8.6px;line-height:8.6px;color:#1a1a1a;white-space:pre;letter-spacing:0px;-webkit-text-stroke:0.03px #1a1a1a;transform:scaleX(0.95);transform-origin:left center">Not allowed</div>
<div style="position:absolute;left:2.6999999999999886px;top:40.15px;width:8.6px;height:6.2px;border:0.9px solid #8a8a8a;background:#f6f6f6"></div>
<div style="position:absolute;left:4.899999999999977px;top:41.95px;width:2.4px;height:3.6px;background:#1a6cb5"></div>
<div style="position:absolute;left:7.7999999999999545px;top:41.95px;width:2.8px;height:3.6px;background:#c9def0"></div>
<div style="position:absolute;left:14.50px;top:40.57px;font-size:8.6px;line-height:8.6px;color:#1a1a1a;white-space:pre;letter-spacing:0px;-webkit-text-stroke:0.03px #1a1a1a;transform:scaleX(0.92);transform-origin:left center">MoUsoCoreWorker.e...</div>
<div style="position:absolute;left:100.50px;top:40.57px;font-size:8.6px;line-height:8.6px;color:#1a1a1a;white-space:pre;letter-spacing:0px;-webkit-text-stroke:0.03px #1a1a1a;transform:scaleX(0.85);transform-origin:left center">8196</div>
<div style="position:absolute;left:134.20px;top:40.57px;font-size:8.6px;line-height:8.6px;color:#1a1a1a;white-space:pre;letter-spacing:0px;-webkit-text-stroke:0.03px #1a1a1a;transform:scaleX(0.93);transform-origin:left center">Running</div>
<div style="position:absolute;left:235.00px;top:40.57px;font-size:8.6px;line-height:8.6px;color:#1a1a1a;white-space:pre;letter-spacing:0px;-webkit-text-stroke:0.03px #1a1a1a;transform:scaleX(0.8);transform-origin:left center">SYSTEM</div>
<div style="position:absolute;right:127.20px;top:40.57px;font-size:8.6px;line-height:8.6px;color:#1a1a1a;white-space:pre;letter-spacing:0px;-webkit-text-stroke:0.03px #1a1a1a;transform:scaleX(0.85);transform-origin:right center">00</div>
<div style="position:absolute;right:71.80px;top:40.57px;font-size:8.6px;line-height:8.6px;color:#1a1a1a;white-space:pre;letter-spacing:0px;-webkit-text-stroke:0.03px #1a1a1a;transform:scaleX(0.83);transform-origin:right center">2,988 K</div>
<div style="position:absolute;left:368.50px;top:40.57px;font-size:8.6px;line-height:8.6px;color:#1a1a1a;white-space:pre;letter-spacing:0px;-webkit-text-stroke:0.03px #1a1a1a;transform:scaleX(0.95);transform-origin:left center">Not allowed</div>
<svg style="position:absolute;left:2.3999999999999773px;top:51.45px" width="11" height="10.5" viewBox="0 0 11 10.5"><path d="M5.1 0.1 C8 0.1 10.2 2.3 10.2 5 C10.2 6.6 9.6 7.6 9.2 8 C8.4 9.2 7 10 5.1 10 C2.3 10 0 7.8 0 5 C0 2.3 2.3 0.1 5.1 0.1Z" fill="url(#ebl)"/><path d="M3.6 3.4 C4.6 1.6 6.6 1.4 8 2 C9.6 2.8 10.3 4.4 10.1 5.8 C9.9 7 9 7.6 8 7.6 C6.8 7.6 5.9 6.8 5.7 5.6 C5.4 4.4 4.6 3.6 3.6 3.4Z" fill="url(#egr)"/><path d="M3.9 4.6 C4.5 4.3 5.3 4.6 5.5 5.5 C5.8 6.8 6.8 7.6 8.4 7.6 C7.6 8.2 6.6 8.3 5.6 8 C4.4 7.5 3.8 6.3 3.9 4.6Z" fill="#e6fbff"/></svg>
<div style="position:absolute;left:14.50px;top:53.27px;font-size:8.6px;line-height:8.6px;color:#1a1a1a;white-space:pre;letter-spacing:0px;-webkit-text-stroke:0.03px #1a1a1a;transform:scaleX(0.9);transform-origin:left center">msedge.exe</div>
<div style="position:absolute;left:100.50px;top:53.27px;font-size:8.6px;line-height:8.6px;color:#1a1a1a;white-space:pre;letter-spacing:0px;-webkit-text-stroke:0.03px #1a1a1a;transform:scaleX(0.85);transform-origin:left center">5024</div>
<div style="position:absolute;left:134.20px;top:53.27px;font-size:8.6px;line-height:8.6px;color:#1a1a1a;white-space:pre;letter-spacing:0px;-webkit-text-stroke:0.03px #1a1a1a;transform:scaleX(0.93);transform-origin:left center">Running</div>
<div style="position:absolute;left:235.00px;top:53.27px;font-size:8.6px;line-height:8.6px;color:#1a1a1a;white-space:pre;letter-spacing:0px;-webkit-text-stroke:0.03px #1a1a1a;transform:scaleX(0.91);transform-origin:left center">p1k4chu</div>
<div style="position:absolute;right:127.20px;top:53.27px;font-size:8.6px;line-height:8.6px;color:#1a1a1a;white-space:pre;letter-spacing:0px;-webkit-text-stroke:0.03px #1a1a1a;transform:scaleX(0.85);transform-origin:right center">00</div>
<div style="position:absolute;right:71.80px;top:53.27px;font-size:8.6px;line-height:8.6px;color:#1a1a1a;white-space:pre;letter-spacing:0px;-webkit-text-stroke:0.03px #1a1a1a;transform:scaleX(0.83);transform-origin:right center">46,884 K</div>
<div style="position:absolute;left:368.50px;top:53.27px;font-size:8.6px;line-height:8.6px;color:#1a1a1a;white-space:pre;letter-spacing:0px;-webkit-text-stroke:0.03px #1a1a1a;transform:scaleX(0.95);transform-origin:left center">Not allowed</div>
<svg style="position:absolute;left:2.3999999999999773px;top:64.15px" width="11" height="10.5" viewBox="0 0 11 10.5"><path d="M5.1 0.1 C8 0.1 10.2 2.3 10.2 5 C10.2 6.6 9.6 7.6 9.2 8 C8.4 9.2 7 10 5.1 10 C2.3 10 0 7.8 0 5 C0 2.3 2.3 0.1 5.1 0.1Z" fill="url(#ebl)"/><path d="M3.6 3.4 C4.6 1.6 6.6 1.4 8 2 C9.6 2.8 10.3 4.4 10.1 5.8 C9.9 7 9 7.6 8 7.6 C6.8 7.6 5.9 6.8 5.7 5.6 C5.4 4.4 4.6 3.6 3.6 3.4Z" fill="url(#egr)"/><path d="M3.9 4.6 C4.5 4.3 5.3 4.6 5.5 5.5 C5.8 6.8 6.8 7.6 8.4 7.6 C7.6 8.2 6.6 8.3 5.6 8 C4.4 7.5 3.8 6.3 3.9 4.6Z" fill="#e6fbff"/></svg>
<div style="position:absolute;left:14.50px;top:65.97px;font-size:8.6px;line-height:8.6px;color:#1a1a1a;white-space:pre;letter-spacing:0px;-webkit-text-stroke:0.03px #1a1a1a;transform:scaleX(0.9);transform-origin:left center">msedge.exe</div>
<div style="position:absolute;left:100.50px;top:65.97px;font-size:8.6px;line-height:8.6px;color:#1a1a1a;white-space:pre;letter-spacing:0px;-webkit-text-stroke:0.03px #1a1a1a;transform:scaleX(0.85);transform-origin:left center">7968</div>
<div style="position:absolute;left:134.20px;top:65.97px;font-size:8.6px;line-height:8.6px;color:#1a1a1a;white-space:pre;letter-spacing:0px;-webkit-text-stroke:0.03px #1a1a1a;transform:scaleX(0.93);transform-origin:left center">Running</div>
<div style="position:absolute;left:235.00px;top:65.97px;font-size:8.6px;line-height:8.6px;color:#1a1a1a;white-space:pre;letter-spacing:0px;-webkit-text-stroke:0.03px #1a1a1a;transform:scaleX(0.91);transform-origin:left center">p1k4chu</div>
<div style="position:absolute;right:127.20px;top:65.97px;font-size:8.6px;line-height:8.6px;color:#1a1a1a;white-space:pre;letter-spacing:0px;-webkit-text-stroke:0.03px #1a1a1a;transform:scaleX(0.85);transform-origin:right center">00</div>
<div style="position:absolute;right:71.80px;top:65.97px;font-size:8.6px;line-height:8.6px;color:#1a1a1a;white-space:pre;letter-spacing:0px;-webkit-text-stroke:0.03px #1a1a1a;transform:scaleX(0.83);transform-origin:right center">508 K</div>
<div style="position:absolute;left:368.50px;top:65.97px;font-size:8.6px;line-height:8.6px;color:#1a1a1a;white-space:pre;letter-spacing:0px;-webkit-text-stroke:0.03px #1a1a1a;transform:scaleX(0.95);transform-origin:left center">Not allowed</div>
<svg style="position:absolute;left:2.3999999999999773px;top:76.85px" width="11" height="10.5" viewBox="0 0 11 10.5"><path d="M5.1 0.1 C8 0.1 10.2 2.3 10.2 5 C10.2 6.6 9.6 7.6 9.2 8 C8.4 9.2 7 10 5.1 10 C2.3 10 0 7.8 0 5 C0 2.3 2.3 0.1 5.1 0.1Z" fill="url(#ebl)"/><path d="M3.6 3.4 C4.6 1.6 6.6 1.4 8 2 C9.6 2.8 10.3 4.4 10.1 5.8 C9.9 7 9 7.6 8 7.6 C6.8 7.6 5.9 6.8 5.7 5.6 C5.4 4.4 4.6 3.6 3.6 3.4Z" fill="url(#egr)"/><path d="M3.9 4.6 C4.5 4.3 5.3 4.6 5.5 5.5 C5.8 6.8 6.8 7.6 8.4 7.6 C7.6 8.2 6.6 8.3 5.6 8 C4.4 7.5 3.8 6.3 3.9 4.6Z" fill="#e6fbff"/></svg>
<div style="position:absolute;left:14.50px;top:78.67px;font-size:8.6px;line-height:8.6px;color:#1a1a1a;white-space:pre;letter-spacing:0px;-webkit-text-stroke:0.03px #1a1a1a;transform:scaleX(0.9);transform-origin:left center">msedge.exe</div>
<div style="position:absolute;left:100.50px;top:78.67px;font-size:8.6px;line-height:8.6px;color:#1a1a1a;white-space:pre;letter-spacing:0px;-webkit-text-stroke:0.03px #1a1a1a;transform:scaleX(0.85);transform-origin:left center">8188</div>
<div style="position:absolute;left:134.20px;top:78.67px;font-size:8.6px;line-height:8.6px;color:#1a1a1a;white-space:pre;letter-spacing:0px;-webkit-text-stroke:0.03px #1a1a1a;transform:scaleX(0.93);transform-origin:left center">Running</div>
<div style="position:absolute;left:235.00px;top:78.67px;font-size:8.6px;line-height:8.6px;color:#1a1a1a;white-space:pre;letter-spacing:0px;-webkit-text-stroke:0.03px #1a1a1a;transform:scaleX(0.91);transform-origin:left center">p1k4chu</div>
<div style="position:absolute;right:127.20px;top:78.67px;font-size:8.6px;line-height:8.6px;color:#1a1a1a;white-space:pre;letter-spacing:0px;-webkit-text-stroke:0.03px #1a1a1a;transform:scaleX(0.85);transform-origin:right center">00</div>
<div style="position:absolute;right:71.80px;top:78.67px;font-size:8.6px;line-height:8.6px;color:#1a1a1a;white-space:pre;letter-spacing:0px;-webkit-text-stroke:0.03px #1a1a1a;transform:scaleX(0.83);transform-origin:right center">5,672 K</div>
<div style="position:absolute;left:368.50px;top:78.67px;font-size:8.6px;line-height:8.6px;color:#1a1a1a;white-space:pre;letter-spacing:0px;-webkit-text-stroke:0.03px #1a1a1a;transform:scaleX(0.95);transform-origin:left center">Not allowed</div>
<svg style="position:absolute;left:2.3999999999999773px;top:89.55px" width="11" height="10.5" viewBox="0 0 11 10.5"><path d="M5.1 0.1 C8 0.1 10.2 2.3 10.2 5 C10.2 6.6 9.6 7.6 9.2 8 C8.4 9.2 7 10 5.1 10 C2.3 10 0 7.8 0 5 C0 2.3 2.3 0.1 5.1 0.1Z" fill="url(#ebl)"/><path d="M3.6 3.4 C4.6 1.6 6.6 1.4 8 2 C9.6 2.8 10.3 4.4 10.1 5.8 C9.9 7 9 7.6 8 7.6 C6.8 7.6 5.9 6.8 5.7 5.6 C5.4 4.4 4.6 3.6 3.6 3.4Z" fill="url(#egr)"/><path d="M3.9 4.6 C4.5 4.3 5.3 4.6 5.5 5.5 C5.8 6.8 6.8 7.6 8.4 7.6 C7.6 8.2 6.6 8.3 5.6 8 C4.4 7.5 3.8 6.3 3.9 4.6Z" fill="#e6fbff"/></svg>
<div style="position:absolute;left:14.50px;top:91.37px;font-size:8.6px;line-height:8.6px;color:#1a1a1a;white-space:pre;letter-spacing:0px;-webkit-text-stroke:0.03px #1a1a1a;transform:scaleX(0.9);transform-origin:left center">msedge.exe</div>
<div style="position:absolute;left:100.50px;top:91.37px;font-size:8.6px;line-height:8.6px;color:#1a1a1a;white-space:pre;letter-spacing:0px;-webkit-text-stroke:0.03px #1a1a1a;transform:scaleX(0.85);transform-origin:left center">2560</div>
<div style="position:absolute;left:134.20px;top:91.37px;font-size:8.6px;line-height:8.6px;color:#1a1a1a;white-space:pre;letter-spacing:0px;-webkit-text-stroke:0.03px #1a1a1a;transform:scaleX(0.93);transform-origin:left center">Running</div>
<div style="position:absolute;left:235.00px;top:91.37px;font-size:8.6px;line-height:8.6px;color:#1a1a1a;white-space:pre;letter-spacing:0px;-webkit-text-stroke:0.03px #1a1a1a;transform:scaleX(0.91);transform-origin:left center">p1k4chu</div>
<div style="position:absolute;right:127.20px;top:91.37px;font-size:8.6px;line-height:8.6px;color:#1a1a1a;white-space:pre;letter-spacing:0px;-webkit-text-stroke:0.03px #1a1a1a;transform:scaleX(0.85);transform-origin:right center">00</div>
<div style="position:absolute;right:71.80px;top:91.37px;font-size:8.6px;line-height:8.6px;color:#1a1a1a;white-space:pre;letter-spacing:0px;-webkit-text-stroke:0.03px #1a1a1a;transform:scaleX(0.83);transform-origin:right center">6,860 K</div>
<div style="position:absolute;left:368.50px;top:91.37px;font-size:8.6px;line-height:8.6px;color:#1a1a1a;white-space:pre;letter-spacing:0px;-webkit-text-stroke:0.03px #1a1a1a;transform:scaleX(0.95);transform-origin:left center">Not allowed</div>
<svg style="position:absolute;left:2.3999999999999773px;top:102.25px" width="11" height="10.5" viewBox="0 0 11 10.5"><path d="M5.1 0.1 C8 0.1 10.2 2.3 10.2 5 C10.2 6.6 9.6 7.6 9.2 8 C8.4 9.2 7 10 5.1 10 C2.3 10 0 7.8 0 5 C0 2.3 2.3 0.1 5.1 0.1Z" fill="url(#ebl)"/><path d="M3.6 3.4 C4.6 1.6 6.6 1.4 8 2 C9.6 2.8 10.3 4.4 10.1 5.8 C9.9 7 9 7.6 8 7.6 C6.8 7.6 5.9 6.8 5.7 5.6 C5.4 4.4 4.6 3.6 3.6 3.4Z" fill="url(#egr)"/><path d="M3.9 4.6 C4.5 4.3 5.3 4.6 5.5 5.5 C5.8 6.8 6.8 7.6 8.4 7.6 C7.6 8.2 6.6 8.3 5.6 8 C4.4 7.5 3.8 6.3 3.9 4.6Z" fill="#e6fbff"/></svg>
<div style="position:absolute;left:14.50px;top:104.07px;font-size:8.6px;line-height:8.6px;color:#1a1a1a;white-space:pre;letter-spacing:0px;-webkit-text-stroke:0.03px #1a1a1a;transform:scaleX(0.9);transform-origin:left center">msedge.exe</div>
<div style="position:absolute;left:100.50px;top:104.07px;font-size:8.6px;line-height:8.6px;color:#1a1a1a;white-space:pre;letter-spacing:0px;-webkit-text-stroke:0.03px #1a1a1a;transform:scaleX(0.85);transform-origin:left center">8016</div>
<div style="position:absolute;left:134.20px;top:104.07px;font-size:8.6px;line-height:8.6px;color:#1a1a1a;white-space:pre;letter-spacing:0px;-webkit-text-stroke:0.03px #1a1a1a;transform:scaleX(0.93);transform-origin:left center">Running</div>
<div style="position:absolute;left:235.00px;top:104.07px;font-size:8.6px;line-height:8.6px;color:#1a1a1a;white-space:pre;letter-spacing:0px;-webkit-text-stroke:0.03px #1a1a1a;transform:scaleX(0.91);transform-origin:left center">p1k4chu</div>
<div style="position:absolute;right:127.20px;top:104.07px;font-size:8.6px;line-height:8.6px;color:#1a1a1a;white-space:pre;letter-spacing:0px;-webkit-text-stroke:0.03px #1a1a1a;transform:scaleX(0.85);transform-origin:right center">00</div>
<div style="position:absolute;right:71.80px;top:104.07px;font-size:8.6px;line-height:8.6px;color:#1a1a1a;white-space:pre;letter-spacing:0px;-webkit-text-stroke:0.03px #1a1a1a;transform:scaleX(0.83);transform-origin:right center">1,900 K</div>
<div style="position:absolute;left:368.50px;top:104.07px;font-size:8.6px;line-height:8.6px;color:#1a1a1a;white-space:pre;letter-spacing:0px;-webkit-text-stroke:0.03px #1a1a1a;transform:scaleX(0.95);transform-origin:left center">Not allowed</div>
<svg style="position:absolute;left:2.3999999999999773px;top:114.95px" width="11" height="10.5" viewBox="0 0 11 10.5"><path d="M5.1 0.1 C8 0.1 10.2 2.3 10.2 5 C10.2 6.6 9.6 7.6 9.2 8 C8.4 9.2 7 10 5.1 10 C2.3 10 0 7.8 0 5 C0 2.3 2.3 0.1 5.1 0.1Z" fill="url(#ebl)"/><path d="M3.6 3.4 C4.6 1.6 6.6 1.4 8 2 C9.6 2.8 10.3 4.4 10.1 5.8 C9.9 7 9 7.6 8 7.6 C6.8 7.6 5.9 6.8 5.7 5.6 C5.4 4.4 4.6 3.6 3.6 3.4Z" fill="url(#egr)"/><path d="M3.9 4.6 C4.5 4.3 5.3 4.6 5.5 5.5 C5.8 6.8 6.8 7.6 8.4 7.6 C7.6 8.2 6.6 8.3 5.6 8 C4.4 7.5 3.8 6.3 3.9 4.6Z" fill="#e6fbff"/></svg>
<div style="position:absolute;left:14.50px;top:116.77px;font-size:8.6px;line-height:8.6px;color:#1a1a1a;white-space:pre;letter-spacing:0px;-webkit-text-stroke:0.03px #1a1a1a;transform:scaleX(0.9);transform-origin:left center">msedge.exe</div>
<div style="position:absolute;left:100.50px;top:116.77px;font-size:8.6px;line-height:8.6px;color:#1a1a1a;white-space:pre;letter-spacing:0px;-webkit-text-stroke:0.03px #1a1a1a;transform:scaleX(0.85);transform-origin:left center">8512</div>
<div style="position:absolute;left:134.20px;top:116.77px;font-size:8.6px;line-height:8.6px;color:#1a1a1a;white-space:pre;letter-spacing:0px;-webkit-text-stroke:0.03px #1a1a1a;transform:scaleX(0.93);transform-origin:left center">Running</div>
<div style="position:absolute;left:235.00px;top:116.77px;font-size:8.6px;line-height:8.6px;color:#1a1a1a;white-space:pre;letter-spacing:0px;-webkit-text-stroke:0.03px #1a1a1a;transform:scaleX(0.91);transform-origin:left center">p1k4chu</div>
<div style="position:absolute;right:127.20px;top:116.77px;font-size:8.6px;line-height:8.6px;color:#1a1a1a;white-space:pre;letter-spacing:0px;-webkit-text-stroke:0.03px #1a1a1a;transform:scaleX(0.85);transform-origin:right center">00</div>
<div style="position:absolute;right:71.80px;top:116.77px;font-size:8.6px;line-height:8.6px;color:#1a1a1a;white-space:pre;letter-spacing:0px;-webkit-text-stroke:0.03px #1a1a1a;transform:scaleX(0.83);transform-origin:right center">74,452 K</div>
<div style="position:absolute;left:368.50px;top:116.77px;font-size:8.6px;line-height:8.6px;color:#1a1a1a;white-space:pre;letter-spacing:0px;-webkit-text-stroke:0.03px #1a1a1a;transform:scaleX(0.95);transform-origin:left center">Not allowed</div>
<svg style="position:absolute;left:2.3999999999999773px;top:127.65px" width="11" height="10.5" viewBox="0 0 11 10.5"><path d="M5.1 0.1 C8 0.1 10.2 2.3 10.2 5 C10.2 6.6 9.6 7.6 9.2 8 C8.4 9.2 7 10 5.1 10 C2.3 10 0 7.8 0 5 C0 2.3 2.3 0.1 5.1 0.1Z" fill="url(#ebl)"/><path d="M3.6 3.4 C4.6 1.6 6.6 1.4 8 2 C9.6 2.8 10.3 4.4 10.1 5.8 C9.9 7 9 7.6 8 7.6 C6.8 7.6 5.9 6.8 5.7 5.6 C5.4 4.4 4.6 3.6 3.6 3.4Z" fill="url(#egr)"/><path d="M3.9 4.6 C4.5 4.3 5.3 4.6 5.5 5.5 C5.8 6.8 6.8 7.6 8.4 7.6 C7.6 8.2 6.6 8.3 5.6 8 C4.4 7.5 3.8 6.3 3.9 4.6Z" fill="#e6fbff"/></svg>
<div style="position:absolute;left:14.50px;top:129.47px;font-size:8.6px;line-height:8.6px;color:#1a1a1a;white-space:pre;letter-spacing:0px;-webkit-text-stroke:0.03px #1a1a1a;transform:scaleX(0.9);transform-origin:left center">msedge.exe</div>
<div style="position:absolute;left:100.50px;top:129.47px;font-size:8.6px;line-height:8.6px;color:#1a1a1a;white-space:pre;letter-spacing:0px;-webkit-text-stroke:0.03px #1a1a1a;transform:scaleX(0.85);transform-origin:left center">8632</div>
<div style="position:absolute;left:134.20px;top:129.47px;font-size:8.6px;line-height:8.6px;color:#1a1a1a;white-space:pre;letter-spacing:0px;-webkit-text-stroke:0.03px #1a1a1a;transform:scaleX(0.93);transform-origin:left center">Running</div>
<div style="position:absolute;left:235.00px;top:129.47px;font-size:8.6px;line-height:8.6px;color:#1a1a1a;white-space:pre;letter-spacing:0px;-webkit-text-stroke:0.03px #1a1a1a;transform:scaleX(0.91);transform-origin:left center">p1k4chu</div>
<div style="position:absolute;right:127.20px;top:129.47px;font-size:8.6px;line-height:8.6px;color:#1a1a1a;white-space:pre;letter-spacing:0px;-webkit-text-stroke:0.03px #1a1a1a;transform:scaleX(0.85);transform-origin:right center">00</div>
<div style="position:absolute;right:71.80px;top:129.47px;font-size:8.6px;line-height:8.6px;color:#1a1a1a;white-space:pre;letter-spacing:0px;-webkit-text-stroke:0.03px #1a1a1a;transform:scaleX(0.83);transform-origin:right center">25,744 K</div>
<div style="position:absolute;left:368.50px;top:129.47px;font-size:8.6px;line-height:8.6px;color:#1a1a1a;white-space:pre;letter-spacing:0px;-webkit-text-stroke:0.03px #1a1a1a;transform:scaleX(0.95);transform-origin:left center">Not allowed</div>
<svg style="position:absolute;left:2.3999999999999773px;top:140.35px" width="11" height="10.5" viewBox="0 0 11 10.5"><path d="M5.1 0.1 C8 0.1 10.2 2.3 10.2 5 C10.2 6.6 9.6 7.6 9.2 8 C8.4 9.2 7 10 5.1 10 C2.3 10 0 7.8 0 5 C0 2.3 2.3 0.1 5.1 0.1Z" fill="url(#ebl)"/><path d="M3.6 3.4 C4.6 1.6 6.6 1.4 8 2 C9.6 2.8 10.3 4.4 10.1 5.8 C9.9 7 9 7.6 8 7.6 C6.8 7.6 5.9 6.8 5.7 5.6 C5.4 4.4 4.6 3.6 3.6 3.4Z" fill="url(#egr)"/><path d="M3.9 4.6 C4.5 4.3 5.3 4.6 5.5 5.5 C5.8 6.8 6.8 7.6 8.4 7.6 C7.6 8.2 6.6 8.3 5.6 8 C4.4 7.5 3.8 6.3 3.9 4.6Z" fill="#e6fbff"/></svg>
<div style="position:absolute;left:14.50px;top:142.17px;font-size:8.6px;line-height:8.6px;color:#1a1a1a;white-space:pre;letter-spacing:0px;-webkit-text-stroke:0.03px #1a1a1a;transform:scaleX(0.9);transform-origin:left center">msedge.exe</div>
<div style="position:absolute;left:100.50px;top:142.17px;font-size:8.6px;line-height:8.6px;color:#1a1a1a;white-space:pre;letter-spacing:0px;-webkit-text-stroke:0.03px #1a1a1a;transform:scaleX(0.85);transform-origin:left center">7656</div>
<div style="position:absolute;left:134.20px;top:142.17px;font-size:8.6px;line-height:8.6px;color:#1a1a1a;white-space:pre;letter-spacing:0px;-webkit-text-stroke:0.03px #1a1a1a;transform:scaleX(0.93);transform-origin:left center">Running</div>
<div style="position:absolute;left:235.00px;top:142.17px;font-size:8.6px;line-height:8.6px;color:#1a1a1a;white-space:pre;letter-spacing:0px;-webkit-text-stroke:0.03px #1a1a1a;transform:scaleX(0.91);transform-origin:left center">p1k4chu</div>
<div style="position:absolute;right:127.20px;top:142.17px;font-size:8.6px;line-height:8.6px;color:#1a1a1a;white-space:pre;letter-spacing:0px;-webkit-text-stroke:0.03px #1a1a1a;transform:scaleX(0.85);transform-origin:right center">00</div>
<div style="position:absolute;right:71.80px;top:142.17px;font-size:8.6px;line-height:8.6px;color:#1a1a1a;white-space:pre;letter-spacing:0px;-webkit-text-stroke:0.03px #1a1a1a;transform:scaleX(0.83);transform-origin:right center">3,512 K</div>
<div style="position:absolute;left:368.50px;top:142.17px;font-size:8.6px;line-height:8.6px;color:#1a1a1a;white-space:pre;letter-spacing:0px;-webkit-text-stroke:0.03px #1a1a1a;transform:scaleX(0.95);transform-origin:left center">Not allowed</div>
<svg style="position:absolute;left:2.3999999999999773px;top:153.05px" width="11" height="10.5" viewBox="0 0 11 10.5"><path d="M5.1 0.1 C8 0.1 10.2 2.3 10.2 5 C10.2 6.6 9.6 7.6 9.2 8 C8.4 9.2 7 10 5.1 10 C2.3 10 0 7.8 0 5 C0 2.3 2.3 0.1 5.1 0.1Z" fill="url(#ebl)"/><path d="M3.6 3.4 C4.6 1.6 6.6 1.4 8 2 C9.6 2.8 10.3 4.4 10.1 5.8 C9.9 7 9 7.6 8 7.6 C6.8 7.6 5.9 6.8 5.7 5.6 C5.4 4.4 4.6 3.6 3.6 3.4Z" fill="url(#egr)"/><path d="M3.9 4.6 C4.5 4.3 5.3 4.6 5.5 5.5 C5.8 6.8 6.8 7.6 8.4 7.6 C7.6 8.2 6.6 8.3 5.6 8 C4.4 7.5 3.8 6.3 3.9 4.6Z" fill="#e6fbff"/></svg>
<div style="position:absolute;left:14.50px;top:154.87px;font-size:8.6px;line-height:8.6px;color:#1a1a1a;white-space:pre;letter-spacing:0px;-webkit-text-stroke:0.03px #1a1a1a;transform:scaleX(0.9);transform-origin:left center">msedge.exe</div>
<div style="position:absolute;left:100.50px;top:154.87px;font-size:8.6px;line-height:8.6px;color:#1a1a1a;white-space:pre;letter-spacing:0px;-webkit-text-stroke:0.03px #1a1a1a;transform:scaleX(0.85);transform-origin:left center">10228</div>
<div style="position:absolute;left:134.20px;top:154.87px;font-size:8.6px;line-height:8.6px;color:#1a1a1a;white-space:pre;letter-spacing:0px;-webkit-text-stroke:0.03px #1a1a1a;transform:scaleX(0.93);transform-origin:left center">Running</div>
<div style="position:absolute;left:235.00px;top:154.87px;font-size:8.6px;line-height:8.6px;color:#1a1a1a;white-space:pre;letter-spacing:0px;-webkit-text-stroke:0.03px #1a1a1a;transform:scaleX(0.91);transform-origin:left center">p1k4chu</div>
<div style="position:absolute;right:127.20px;top:154.87px;font-size:8.6px;line-height:8.6px;color:#1a1a1a;white-space:pre;letter-spacing:0px;-webkit-text-stroke:0.03px #1a1a1a;transform:scaleX(0.85);transform-origin:right center">00</div>
<div style="position:absolute;right:71.80px;top:154.87px;font-size:8.6px;line-height:8.6px;color:#1a1a1a;white-space:pre;letter-spacing:0px;-webkit-text-stroke:0.03px #1a1a1a;transform:scaleX(0.83);transform-origin:right center">37,088 K</div>
<div style="position:absolute;left:368.50px;top:154.87px;font-size:8.6px;line-height:8.6px;color:#1a1a1a;white-space:pre;letter-spacing:0px;-webkit-text-stroke:0.03px #1a1a1a;transform:scaleX(0.95);transform-origin:left center">Not allowed</div>
<svg style="position:absolute;left:2.3999999999999773px;top:165.75px" width="11" height="10.5" viewBox="0 0 11 10.5"><path d="M5.1 0.1 C8 0.1 10.2 2.3 10.2 5 C10.2 6.6 9.6 7.6 9.2 8 C8.4 9.2 7 10 5.1 10 C2.3 10 0 7.8 0 5 C0 2.3 2.3 0.1 5.1 0.1Z" fill="url(#ebl)"/><path d="M3.6 3.4 C4.6 1.6 6.6 1.4 8 2 C9.6 2.8 10.3 4.4 10.1 5.8 C9.9 7 9 7.6 8 7.6 C6.8 7.6 5.9 6.8 5.7 5.6 C5.4 4.4 4.6 3.6 3.6 3.4Z" fill="url(#egr)"/><path d="M3.9 4.6 C4.5 4.3 5.3 4.6 5.5 5.5 C5.8 6.8 6.8 7.6 8.4 7.6 C7.6 8.2 6.6 8.3 5.6 8 C4.4 7.5 3.8 6.3 3.9 4.6Z" fill="#e6fbff"/></svg>
<div style="position:absolute;left:14.50px;top:167.57px;font-size:8.6px;line-height:8.6px;color:#1a1a1a;white-space:pre;letter-spacing:0px;-webkit-text-stroke:0.03px #1a1a1a;transform:scaleX(0.9);transform-origin:left center">msedge.exe</div>
<div style="position:absolute;left:100.50px;top:167.57px;font-size:8.6px;line-height:8.6px;color:#1a1a1a;white-space:pre;letter-spacing:0px;-webkit-text-stroke:0.03px #1a1a1a;transform:scaleX(0.85);transform-origin:left center">8812</div>
<div style="position:absolute;left:134.20px;top:167.57px;font-size:8.6px;line-height:8.6px;color:#1a1a1a;white-space:pre;letter-spacing:0px;-webkit-text-stroke:0.03px #1a1a1a;transform:scaleX(0.93);transform-origin:left center">Running</div>
<div style="position:absolute;left:235.00px;top:167.57px;font-size:8.6px;line-height:8.6px;color:#1a1a1a;white-space:pre;letter-spacing:0px;-webkit-text-stroke:0.03px #1a1a1a;transform:scaleX(0.91);transform-origin:left center">p1k4chu</div>
<div style="position:absolute;right:127.20px;top:167.57px;font-size:8.6px;line-height:8.6px;color:#1a1a1a;white-space:pre;letter-spacing:0px;-webkit-text-stroke:0.03px #1a1a1a;transform:scaleX(0.85);transform-origin:right center">00</div>
<div style="position:absolute;right:71.80px;top:167.57px;font-size:8.6px;line-height:8.6px;color:#1a1a1a;white-space:pre;letter-spacing:0px;-webkit-text-stroke:0.03px #1a1a1a;transform:scaleX(0.83);transform-origin:right center">30,464 K</div>
<div style="position:absolute;left:368.50px;top:167.57px;font-size:8.6px;line-height:8.6px;color:#1a1a1a;white-space:pre;letter-spacing:0px;-webkit-text-stroke:0.03px #1a1a1a;transform:scaleX(0.95);transform-origin:left center">Not allowed</div>
<svg style="position:absolute;left:2.3999999999999773px;top:178.45px" width="11" height="10.5" viewBox="0 0 11 10.5"><path d="M5.1 0.1 C8 0.1 10.2 2.3 10.2 5 C10.2 6.6 9.6 7.6 9.2 8 C8.4 9.2 7 10 5.1 10 C2.3 10 0 7.8 0 5 C0 2.3 2.3 0.1 5.1 0.1Z" fill="url(#ebl)"/><path d="M3.6 3.4 C4.6 1.6 6.6 1.4 8 2 C9.6 2.8 10.3 4.4 10.1 5.8 C9.9 7 9 7.6 8 7.6 C6.8 7.6 5.9 6.8 5.7 5.6 C5.4 4.4 4.6 3.6 3.6 3.4Z" fill="url(#egr)"/><path d="M3.9 4.6 C4.5 4.3 5.3 4.6 5.5 5.5 C5.8 6.8 6.8 7.6 8.4 7.6 C7.6 8.2 6.6 8.3 5.6 8 C4.4 7.5 3.8 6.3 3.9 4.6Z" fill="#e6fbff"/></svg>
<div style="position:absolute;left:14.50px;top:180.27px;font-size:8.6px;line-height:8.6px;color:#1a1a1a;white-space:pre;letter-spacing:0px;-webkit-text-stroke:0.03px #1a1a1a;transform:scaleX(0.9);transform-origin:left center">msedge.exe</div>
<div style="position:absolute;left:100.50px;top:180.27px;font-size:8.6px;line-height:8.6px;color:#1a1a1a;white-space:pre;letter-spacing:0px;-webkit-text-stroke:0.03px #1a1a1a;transform:scaleX(0.85);transform-origin:left center">8000</div>
<div style="position:absolute;left:134.20px;top:180.27px;font-size:8.6px;line-height:8.6px;color:#1a1a1a;white-space:pre;letter-spacing:0px;-webkit-text-stroke:0.03px #1a1a1a;transform:scaleX(0.93);transform-origin:left center">Running</div>
<div style="position:absolute;left:235.00px;top:180.27px;font-size:8.6px;line-height:8.6px;color:#1a1a1a;white-space:pre;letter-spacing:0px;-webkit-text-stroke:0.03px #1a1a1a;transform:scaleX(0.91);transform-origin:left center">p1k4chu</div>
<div style="position:absolute;right:127.20px;top:180.27px;font-size:8.6px;line-height:8.6px;color:#1a1a1a;white-space:pre;letter-spacing:0px;-webkit-text-stroke:0.03px #1a1a1a;transform:scaleX(0.85);transform-origin:right center">00</div>
<div style="position:absolute;right:71.80px;top:180.27px;font-size:8.6px;line-height:8.6px;color:#1a1a1a;white-space:pre;letter-spacing:0px;-webkit-text-stroke:0.03px #1a1a1a;transform:scaleX(0.83);transform-origin:right center">3,440 K</div>
<div style="position:absolute;left:368.50px;top:180.27px;font-size:8.6px;line-height:8.6px;color:#1a1a1a;white-space:pre;letter-spacing:0px;-webkit-text-stroke:0.03px #1a1a1a;transform:scaleX(0.95);transform-origin:left center">Not allowed</div>
<svg style="position:absolute;left:2.3999999999999773px;top:191.15px" width="11" height="10.5" viewBox="0 0 11 10.5"><path d="M5.1 0.1 C8 0.1 10.2 2.3 10.2 5 C10.2 6.6 9.6 7.6 9.2 8 C8.4 9.2 7 10 5.1 10 C2.3 10 0 7.8 0 5 C0 2.3 2.3 0.1 5.1 0.1Z" fill="url(#ebl)"/><path d="M3.6 3.4 C4.6 1.6 6.6 1.4 8 2 C9.6 2.8 10.3 4.4 10.1 5.8 C9.9 7 9 7.6 8 7.6 C6.8 7.6 5.9 6.8 5.7 5.6 C5.4 4.4 4.6 3.6 3.6 3.4Z" fill="url(#egr)"/><path d="M3.9 4.6 C4.5 4.3 5.3 4.6 5.5 5.5 C5.8 6.8 6.8 7.6 8.4 7.6 C7.6 8.2 6.6 8.3 5.6 8 C4.4 7.5 3.8 6.3 3.9 4.6Z" fill="#e6fbff"/></svg>
<div style="position:absolute;left:14.50px;top:192.97px;font-size:8.6px;line-height:8.6px;color:#1a1a1a;white-space:pre;letter-spacing:0px;-webkit-text-stroke:0.03px #1a1a1a;transform:scaleX(0.9);transform-origin:left center">msedge.exe</div>
<div style="position:absolute;left:100.50px;top:192.97px;font-size:8.6px;line-height:8.6px;color:#1a1a1a;white-space:pre;letter-spacing:0px;-webkit-text-stroke:0.03px #1a1a1a;transform:scaleX(0.85);transform-origin:left center">7064</div>
<div style="position:absolute;left:134.20px;top:192.97px;font-size:8.6px;line-height:8.6px;color:#1a1a1a;white-space:pre;letter-spacing:0px;-webkit-text-stroke:0.03px #1a1a1a;transform:scaleX(0.93);transform-origin:left center">Running</div>
<div style="position:absolute;left:235.00px;top:192.97px;font-size:8.6px;line-height:8.6px;color:#1a1a1a;white-space:pre;letter-spacing:0px;-webkit-text-stroke:0.03px #1a1a1a;transform:scaleX(0.91);transform-origin:left center">p1k4chu</div>
<div style="position:absolute;right:127.20px;top:192.97px;font-size:8.6px;line-height:8.6px;color:#1a1a1a;white-space:pre;letter-spacing:0px;-webkit-text-stroke:0.03px #1a1a1a;transform:scaleX(0.85);transform-origin:right center">00</div>
<div style="position:absolute;right:71.80px;top:192.97px;font-size:8.6px;line-height:8.6px;color:#1a1a1a;white-space:pre;letter-spacing:0px;-webkit-text-stroke:0.03px #1a1a1a;transform:scaleX(0.83);transform-origin:right center">34,720 K</div>
<div style="position:absolute;left:368.50px;top:192.97px;font-size:8.6px;line-height:8.6px;color:#1a1a1a;white-space:pre;letter-spacing:0px;-webkit-text-stroke:0.03px #1a1a1a;transform:scaleX(0.95);transform-origin:left center">Not allowed</div>
<svg style="position:absolute;left:2.3999999999999773px;top:203.85px" width="11" height="10.5" viewBox="0 0 11 10.5"><path d="M5.1 0.1 C8 0.1 10.2 2.3 10.2 5 C10.2 6.6 9.6 7.6 9.2 8 C8.4 9.2 7 10 5.1 10 C2.3 10 0 7.8 0 5 C0 2.3 2.3 0.1 5.1 0.1Z" fill="url(#ebl)"/><path d="M3.6 3.4 C4.6 1.6 6.6 1.4 8 2 C9.6 2.8 10.3 4.4 10.1 5.8 C9.9 7 9 7.6 8 7.6 C6.8 7.6 5.9 6.8 5.7 5.6 C5.4 4.4 4.6 3.6 3.6 3.4Z" fill="url(#egr)"/><path d="M3.9 4.6 C4.5 4.3 5.3 4.6 5.5 5.5 C5.8 6.8 6.8 7.6 8.4 7.6 C7.6 8.2 6.6 8.3 5.6 8 C4.4 7.5 3.8 6.3 3.9 4.6Z" fill="#e6fbff"/></svg>
<div style="position:absolute;left:14.50px;top:205.67px;font-size:8.6px;line-height:8.6px;color:#1a1a1a;white-space:pre;letter-spacing:0px;-webkit-text-stroke:0.03px #1a1a1a;transform:scaleX(0.9);transform-origin:left center">msedge.exe</div>
<div style="position:absolute;left:100.50px;top:205.67px;font-size:8.6px;line-height:8.6px;color:#1a1a1a;white-space:pre;letter-spacing:0px;-webkit-text-stroke:0.03px #1a1a1a;transform:scaleX(0.85);transform-origin:left center">6692</div>
<div style="position:absolute;left:134.20px;top:205.67px;font-size:8.6px;line-height:8.6px;color:#1a1a1a;white-space:pre;letter-spacing:0px;-webkit-text-stroke:0.03px #1a1a1a;transform:scaleX(0.93);transform-origin:left center">Running</div>
<div style="position:absolute;left:235.00px;top:205.67px;font-size:8.6px;line-height:8.6px;color:#1a1a1a;white-space:pre;letter-spacing:0px;-webkit-text-stroke:0.03px #1a1a1a;transform:scaleX(0.91);transform-origin:left center">p1k4chu</div>
<div style="position:absolute;right:127.20px;top:205.67px;font-size:8.6px;line-height:8.6px;color:#1a1a1a;white-space:pre;letter-spacing:0px;-webkit-text-stroke:0.03px #1a1a1a;transform:scaleX(0.85);transform-origin:right center">00</div>
<div style="position:absolute;right:71.80px;top:205.67px;font-size:8.6px;line-height:8.6px;color:#1a1a1a;white-space:pre;letter-spacing:0px;-webkit-text-stroke:0.03px #1a1a1a;transform:scaleX(0.83);transform-origin:right center">8,252 K</div>
<div style="position:absolute;left:368.50px;top:205.67px;font-size:8.6px;line-height:8.6px;color:#1a1a1a;white-space:pre;letter-spacing:0px;-webkit-text-stroke:0.03px #1a1a1a;transform:scaleX(0.95);transform-origin:left center">Not allowed</div>
<svg style="position:absolute;left:2.3999999999999773px;top:216.55px" width="11" height="10.5" viewBox="0 0 11 10.5"><path d="M5.1 0.1 C8 0.1 10.2 2.3 10.2 5 C10.2 6.6 9.6 7.6 9.2 8 C8.4 9.2 7 10 5.1 10 C2.3 10 0 7.8 0 5 C0 2.3 2.3 0.1 5.1 0.1Z" fill="url(#ebl)"/><path d="M3.6 3.4 C4.6 1.6 6.6 1.4 8 2 C9.6 2.8 10.3 4.4 10.1 5.8 C9.9 7 9 7.6 8 7.6 C6.8 7.6 5.9 6.8 5.7 5.6 C5.4 4.4 4.6 3.6 3.6 3.4Z" fill="url(#egr)"/><path d="M3.9 4.6 C4.5 4.3 5.3 4.6 5.5 5.5 C5.8 6.8 6.8 7.6 8.4 7.6 C7.6 8.2 6.6 8.3 5.6 8 C4.4 7.5 3.8 6.3 3.9 4.6Z" fill="#e6fbff"/></svg>
<div style="position:absolute;left:14.50px;top:218.37px;font-size:8.6px;line-height:8.6px;color:#1a1a1a;white-space:pre;letter-spacing:0px;-webkit-text-stroke:0.03px #1a1a1a;transform:scaleX(0.9);transform-origin:left center">msedge.exe</div>
<div style="position:absolute;left:100.50px;top:218.37px;font-size:8.6px;line-height:8.6px;color:#1a1a1a;white-space:pre;letter-spacing:0px;-webkit-text-stroke:0.03px #1a1a1a;transform:scaleX(0.85);transform-origin:left center">2948</div>
<div style="position:absolute;left:134.20px;top:218.37px;font-size:8.6px;line-height:8.6px;color:#1a1a1a;white-space:pre;letter-spacing:0px;-webkit-text-stroke:0.03px #1a1a1a;transform:scaleX(0.93);transform-origin:left center">Running</div>
<div style="position:absolute;left:235.00px;top:218.37px;font-size:8.6px;line-height:8.6px;color:#1a1a1a;white-space:pre;letter-spacing:0px;-webkit-text-stroke:0.03px #1a1a1a;transform:scaleX(0.91);transform-origin:left center">p1k4chu</div>
<div style="position:absolute;right:127.20px;top:218.37px;font-size:8.6px;line-height:8.6px;color:#1a1a1a;white-space:pre;letter-spacing:0px;-webkit-text-stroke:0.03px #1a1a1a;transform:scaleX(0.85);transform-origin:right center">00</div>
<div style="position:absolute;right:71.80px;top:218.37px;font-size:8.6px;line-height:8.6px;color:#1a1a1a;white-space:pre;letter-spacing:0px;-webkit-text-stroke:0.03px #1a1a1a;transform:scaleX(0.83);transform-origin:right center">19,488 K</div>
<div style="position:absolute;left:368.50px;top:218.37px;font-size:8.6px;line-height:8.6px;color:#1a1a1a;white-space:pre;letter-spacing:0px;-webkit-text-stroke:0.03px #1a1a1a;transform:scaleX(0.95);transform-origin:left center">Not allowed</div>
<svg style="position:absolute;left:2.3999999999999773px;top:229.25px" width="11" height="10.5" viewBox="0 0 11 10.5"><path d="M5.1 0.1 C8 0.1 10.2 2.3 10.2 5 C10.2 6.6 9.6 7.6 9.2 8 C8.4 9.2 7 10 5.1 10 C2.3 10 0 7.8 0 5 C0 2.3 2.3 0.1 5.1 0.1Z" fill="url(#ebl)"/><path d="M3.6 3.4 C4.6 1.6 6.6 1.4 8 2 C9.6 2.8 10.3 4.4 10.1 5.8 C9.9 7 9 7.6 8 7.6 C6.8 7.6 5.9 6.8 5.7 5.6 C5.4 4.4 4.6 3.6 3.6 3.4Z" fill="url(#egr)"/><path d="M3.9 4.6 C4.5 4.3 5.3 4.6 5.5 5.5 C5.8 6.8 6.8 7.6 8.4 7.6 C7.6 8.2 6.6 8.3 5.6 8 C4.4 7.5 3.8 6.3 3.9 4.6Z" fill="#e6fbff"/></svg>
<div style="position:absolute;left:14.50px;top:231.07px;font-size:8.6px;line-height:8.6px;color:#1a1a1a;white-space:pre;letter-spacing:0px;-webkit-text-stroke:0.03px #1a1a1a;transform:scaleX(0.9);transform-origin:left center">msedge.exe</div>
<div style="position:absolute;left:100.50px;top:231.07px;font-size:8.6px;line-height:8.6px;color:#1a1a1a;white-space:pre;letter-spacing:0px;-webkit-text-stroke:0.03px #1a1a1a;transform:scaleX(0.85);transform-origin:left center">7928</div>
<div style="position:absolute;left:134.20px;top:231.07px;font-size:8.6px;line-height:8.6px;color:#1a1a1a;white-space:pre;letter-spacing:0px;-webkit-text-stroke:0.03px #1a1a1a;transform:scaleX(0.93);transform-origin:left center">Running</div>
<div style="position:absolute;left:235.00px;top:231.07px;font-size:8.6px;line-height:8.6px;color:#1a1a1a;white-space:pre;letter-spacing:0px;-webkit-text-stroke:0.03px #1a1a1a;transform:scaleX(0.91);transform-origin:left center">p1k4chu</div>
<div style="position:absolute;right:127.20px;top:231.07px;font-size:8.6px;line-height:8.6px;color:#1a1a1a;white-space:pre;letter-spacing:0px;-webkit-text-stroke:0.03px #1a1a1a;transform:scaleX(0.85);transform-origin:right center">00</div>
<div style="position:absolute;right:71.80px;top:231.07px;font-size:8.6px;line-height:8.6px;color:#1a1a1a;white-space:pre;letter-spacing:0px;-webkit-text-stroke:0.03px #1a1a1a;transform:scaleX(0.83);transform-origin:right center">28,976 K</div>
<div style="position:absolute;left:368.50px;top:231.07px;font-size:8.6px;line-height:8.6px;color:#1a1a1a;white-space:pre;letter-spacing:0px;-webkit-text-stroke:0.03px #1a1a1a;transform:scaleX(0.95);transform-origin:left center">Not allowed</div>
<svg style="position:absolute;left:2.3999999999999773px;top:241.95px" width="11" height="10.5" viewBox="0 0 11 10.5"><path d="M5.1 0.1 C8 0.1 10.2 2.3 10.2 5 C10.2 6.6 9.6 7.6 9.2 8 C8.4 9.2 7 10 5.1 10 C2.3 10 0 7.8 0 5 C0 2.3 2.3 0.1 5.1 0.1Z" fill="url(#ebl)"/><path d="M3.6 3.4 C4.6 1.6 6.6 1.4 8 2 C9.6 2.8 10.3 4.4 10.1 5.8 C9.9 7 9 7.6 8 7.6 C6.8 7.6 5.9 6.8 5.7 5.6 C5.4 4.4 4.6 3.6 3.6 3.4Z" fill="url(#egr)"/><path d="M3.9 4.6 C4.5 4.3 5.3 4.6 5.5 5.5 C5.8 6.8 6.8 7.6 8.4 7.6 C7.6 8.2 6.6 8.3 5.6 8 C4.4 7.5 3.8 6.3 3.9 4.6Z" fill="#e6fbff"/></svg>
<div style="position:absolute;left:14.50px;top:243.77px;font-size:8.6px;line-height:8.6px;color:#1a1a1a;white-space:pre;letter-spacing:0px;-webkit-text-stroke:0.03px #1a1a1a;transform:scaleX(0.9);transform-origin:left center">msedge.exe</div>
<div style="position:absolute;left:100.50px;top:243.77px;font-size:8.6px;line-height:8.6px;color:#1a1a1a;white-space:pre;letter-spacing:0px;-webkit-text-stroke:0.03px #1a1a1a;transform:scaleX(0.85);transform-origin:left center">11104</div>
<div style="position:absolute;left:134.20px;top:243.77px;font-size:8.6px;line-height:8.6px;color:#1a1a1a;white-space:pre;letter-spacing:0px;-webkit-text-stroke:0.03px #1a1a1a;transform:scaleX(0.93);transform-origin:left center">Running</div>
<div style="position:absolute;left:235.00px;top:243.77px;font-size:8.6px;line-height:8.6px;color:#1a1a1a;white-space:pre;letter-spacing:0px;-webkit-text-stroke:0.03px #1a1a1a;transform:scaleX(0.91);transform-origin:left center">p1k4chu</div>
<div style="position:absolute;right:127.20px;top:243.77px;font-size:8.6px;line-height:8.6px;color:#1a1a1a;white-space:pre;letter-spacing:0px;-webkit-text-stroke:0.03px #1a1a1a;transform:scaleX(0.85);transform-origin:right center">00</div>
<div style="position:absolute;right:71.80px;top:243.77px;font-size:8.6px;line-height:8.6px;color:#1a1a1a;white-space:pre;letter-spacing:0px;-webkit-text-stroke:0.03px #1a1a1a;transform:scaleX(0.83);transform-origin:right center">2,820 K</div>
<div style="position:absolute;left:368.50px;top:243.77px;font-size:8.6px;line-height:8.6px;color:#1a1a1a;white-space:pre;letter-spacing:0px;-webkit-text-stroke:0.03px #1a1a1a;transform:scaleX(0.95);transform-origin:left center">Not allowed</div>
<svg style="position:absolute;left:2.3999999999999773px;top:254.65px" width="11" height="10.5" viewBox="0 0 11 10.5"><path d="M5.1 0.1 C8 0.1 10.2 2.3 10.2 5 C10.2 6.6 9.6 7.6 9.2 8 C8.4 9.2 7 10 5.1 10 C2.3 10 0 7.8 0 5 C0 2.3 2.3 0.1 5.1 0.1Z" fill="url(#ebl)"/><path d="M3.6 3.4 C4.6 1.6 6.6 1.4 8 2 C9.6 2.8 10.3 4.4 10.1 5.8 C9.9 7 9 7.6 8 7.6 C6.8 7.6 5.9 6.8 5.7 5.6 C5.4 4.4 4.6 3.6 3.6 3.4Z" fill="url(#egr)"/><path d="M3.9 4.6 C4.5 4.3 5.3 4.6 5.5 5.5 C5.8 6.8 6.8 7.6 8.4 7.6 C7.6 8.2 6.6 8.3 5.6 8 C4.4 7.5 3.8 6.3 3.9 4.6Z" fill="#e6fbff"/></svg>
<div style="position:absolute;left:14.50px;top:256.47px;font-size:8.6px;line-height:8.6px;color:#1a1a1a;white-space:pre;letter-spacing:0px;-webkit-text-stroke:0.03px #1a1a1a;transform:scaleX(0.9);transform-origin:left center">msedge.exe</div>
<div style="position:absolute;left:100.50px;top:256.47px;font-size:8.6px;line-height:8.6px;color:#1a1a1a;white-space:pre;letter-spacing:0px;-webkit-text-stroke:0.03px #1a1a1a;transform:scaleX(0.85);transform-origin:left center">10284</div>
<div style="position:absolute;left:134.20px;top:256.47px;font-size:8.6px;line-height:8.6px;color:#1a1a1a;white-space:pre;letter-spacing:0px;-webkit-text-stroke:0.03px #1a1a1a;transform:scaleX(0.93);transform-origin:left center">Running</div>
<div style="position:absolute;left:235.00px;top:256.47px;font-size:8.6px;line-height:8.6px;color:#1a1a1a;white-space:pre;letter-spacing:0px;-webkit-text-stroke:0.03px #1a1a1a;transform:scaleX(0.91);transform-origin:left center">p1k4chu</div>
<div style="position:absolute;right:127.20px;top:256.47px;font-size:8.6px;line-height:8.6px;color:#1a1a1a;white-space:pre;letter-spacing:0px;-webkit-text-stroke:0.03px #1a1a1a;transform:scaleX(0.85);transform-origin:right center">00</div>
<div style="position:absolute;right:71.80px;top:256.47px;font-size:8.6px;line-height:8.6px;color:#1a1a1a;white-space:pre;letter-spacing:0px;-webkit-text-stroke:0.03px #1a1a1a;transform:scaleX(0.83);transform-origin:right center">40,448 K</div>
<div style="position:absolute;left:368.50px;top:256.47px;font-size:8.6px;line-height:8.6px;color:#1a1a1a;white-space:pre;letter-spacing:0px;-webkit-text-stroke:0.03px #1a1a1a;transform:scaleX(0.95);transform-origin:left center">Not allowed</div>
<svg style="position:absolute;left:2.3999999999999773px;top:267.35px" width="11" height="10.5" viewBox="0 0 11 10.5"><path d="M5.1 0.1 C8 0.1 10.2 2.3 10.2 5 C10.2 6.6 9.6 7.6 9.2 8 C8.4 9.2 7 10 5.1 10 C2.3 10 0 7.8 0 5 C0 2.3 2.3 0.1 5.1 0.1Z" fill="url(#ebl)"/><path d="M3.6 3.4 C4.6 1.6 6.6 1.4 8 2 C9.6 2.8 10.3 4.4 10.1 5.8 C9.9 7 9 7.6 8 7.6 C6.8 7.6 5.9 6.8 5.7 5.6 C5.4 4.4 4.6 3.6 3.6 3.4Z" fill="url(#egr)"/><path d="M3.9 4.6 C4.5 4.3 5.3 4.6 5.5 5.5 C5.8 6.8 6.8 7.6 8.4 7.6 C7.6 8.2 6.6 8.3 5.6 8 C4.4 7.5 3.8 6.3 3.9 4.6Z" fill="#e6fbff"/></svg>
<div style="position:absolute;left:14.50px;top:269.17px;font-size:8.6px;line-height:8.6px;color:#1a1a1a;white-space:pre;letter-spacing:0px;-webkit-text-stroke:0.03px #1a1a1a;transform:scaleX(0.9);transform-origin:left center">msedge.exe</div>
<div style="position:absolute;left:100.50px;top:269.17px;font-size:8.6px;line-height:8.6px;color:#1a1a1a;white-space:pre;letter-spacing:0px;-webkit-text-stroke:0.03px #1a1a1a;transform:scaleX(0.85);transform-origin:left center">1200</div>
<div style="position:absolute;left:134.20px;top:269.17px;font-size:8.6px;line-height:8.6px;color:#1a1a1a;white-space:pre;letter-spacing:0px;-webkit-text-stroke:0.03px #1a1a1a;transform:scaleX(0.93);transform-origin:left center">Running</div>
<div style="position:absolute;left:235.00px;top:269.17px;font-size:8.6px;line-height:8.6px;color:#1a1a1a;white-space:pre;letter-spacing:0px;-webkit-text-stroke:0.03px #1a1a1a;transform:scaleX(0.91);transform-origin:left center">p1k4chu</div>
<div style="position:absolute;right:127.20px;top:269.17px;font-size:8.6px;line-height:8.6px;color:#1a1a1a;white-space:pre;letter-spacing:0px;-webkit-text-stroke:0.03px #1a1a1a;transform:scaleX(0.85);transform-origin:right center">00</div>
<div style="position:absolute;right:71.80px;top:269.17px;font-size:8.6px;line-height:8.6px;color:#1a1a1a;white-space:pre;letter-spacing:0px;-webkit-text-stroke:0.03px #1a1a1a;transform:scaleX(0.83);transform-origin:right center">18,252 K</div>
<div style="position:absolute;left:368.50px;top:269.17px;font-size:8.6px;line-height:8.6px;color:#1a1a1a;white-space:pre;letter-spacing:0px;-webkit-text-stroke:0.03px #1a1a1a;transform:scaleX(0.95);transform-origin:left center">Not allowed</div>
<svg style="position:absolute;left:2.3999999999999773px;top:280.05px" width="11" height="10.5" viewBox="0 0 11 10.5"><path d="M5.1 0.1 C8 0.1 10.2 2.3 10.2 5 C10.2 6.6 9.6 7.6 9.2 8 C8.4 9.2 7 10 5.1 10 C2.3 10 0 7.8 0 5 C0 2.3 2.3 0.1 5.1 0.1Z" fill="url(#ebl)"/><path d="M3.6 3.4 C4.6 1.6 6.6 1.4 8 2 C9.6 2.8 10.3 4.4 10.1 5.8 C9.9 7 9 7.6 8 7.6 C6.8 7.6 5.9 6.8 5.7 5.6 C5.4 4.4 4.6 3.6 3.6 3.4Z" fill="url(#egr)"/><path d="M3.9 4.6 C4.5 4.3 5.3 4.6 5.5 5.5 C5.8 6.8 6.8 7.6 8.4 7.6 C7.6 8.2 6.6 8.3 5.6 8 C4.4 7.5 3.8 6.3 3.9 4.6Z" fill="#e6fbff"/></svg>
<div style="position:absolute;left:14.50px;top:281.87px;font-size:8.6px;line-height:8.6px;color:#1a1a1a;white-space:pre;letter-spacing:0px;-webkit-text-stroke:0.03px #1a1a1a;transform:scaleX(0.9);transform-origin:left center">msedge.exe</div>
<div style="position:absolute;left:100.50px;top:281.87px;font-size:8.6px;line-height:8.6px;color:#1a1a1a;white-space:pre;letter-spacing:0px;-webkit-text-stroke:0.03px #1a1a1a;transform:scaleX(0.85);transform-origin:left center">6260</div>
<div style="position:absolute;left:134.20px;top:281.87px;font-size:8.6px;line-height:8.6px;color:#1a1a1a;white-space:pre;letter-spacing:0px;-webkit-text-stroke:0.03px #1a1a1a;transform:scaleX(0.93);transform-origin:left center">Running</div>
<div style="position:absolute;left:235.00px;top:281.87px;font-size:8.6px;line-height:8.6px;color:#1a1a1a;white-space:pre;letter-spacing:0px;-webkit-text-stroke:0.03px #1a1a1a;transform:scaleX(0.91);transform-origin:left center">p1k4chu</div>
<div style="position:absolute;right:127.20px;top:281.87px;font-size:8.6px;line-height:8.6px;color:#1a1a1a;white-space:pre;letter-spacing:0px;-webkit-text-stroke:0.03px #1a1a1a;transform:scaleX(0.85);transform-origin:right center">00</div>
<div style="position:absolute;right:71.80px;top:281.87px;font-size:8.6px;line-height:8.6px;color:#1a1a1a;white-space:pre;letter-spacing:0px;-webkit-text-stroke:0.03px #1a1a1a;transform:scaleX(0.83);transform-origin:right center">9,172 K</div>
<div style="position:absolute;left:368.50px;top:281.87px;font-size:8.6px;line-height:8.6px;color:#1a1a1a;white-space:pre;letter-spacing:0px;-webkit-text-stroke:0.03px #1a1a1a;transform:scaleX(0.95);transform-origin:left center">Not allowed</div>
</div>
<div style="position:absolute;left:507.0px;top:684.1px;width:441.9px;height:0.9px;background:#cfcfcf"></div>
<svg style="position:absolute;left:511px;top:693.5px" width="14" height="14" viewBox="0 0 14 14"><circle cx="7" cy="7" r="6.3" fill="none" stroke="#a0a0a0" stroke-width="0.8"/><path d="M4.2 8.2 L7 5.4 L9.8 8.2" stroke="#8a8a8a" stroke-width="0.8" fill="none"/></svg>
<div style="position:absolute;left:530.20px;top:696.02px;font-size:8.6px;line-height:8.6px;color:#1a1a1a;white-space:pre;letter-spacing:0px;transform:scaleX(0.88);transform-origin:left center;-webkit-text-stroke:0.03px #1a1a1a;">Fewer details</div>
<div style="position:absolute;left:552px;top:704.3px;width:4.6px;height:0.7px;background:#1a1a1a"></div>
<div style="position:absolute;left:888px;top:693.2px;width:53.8px;height:12.6px;background:#e1e1e1;border:0.8px solid #c4c4c4"></div>
<div style="position:absolute;left:901.30px;top:695.92px;font-size:8.6px;line-height:8.6px;color:#1a1a1a;white-space:pre;letter-spacing:0px;transform:scaleX(0.88);transform-origin:left center;-webkit-text-stroke:0.03px #1a1a1a;">End task</div>
<div style="position:absolute;left:901.3px;top:704.1px;width:5px;height:0.7px;background:#1a1a1a"></div>
<div style="position:absolute;left:505.2px;top:406.5px;width:423.60px;height:14.00px;border:2.3px solid #dd1016;"></div>
<div style="position:absolute;left:951px;top:429.2px;width:73px;height:0.8px;background:#ececec"></div>
<div style="position:absolute;left:951px;top:447.7px;width:73px;height:1.3px;background:#b9b9b9"></div>
</body></html>
